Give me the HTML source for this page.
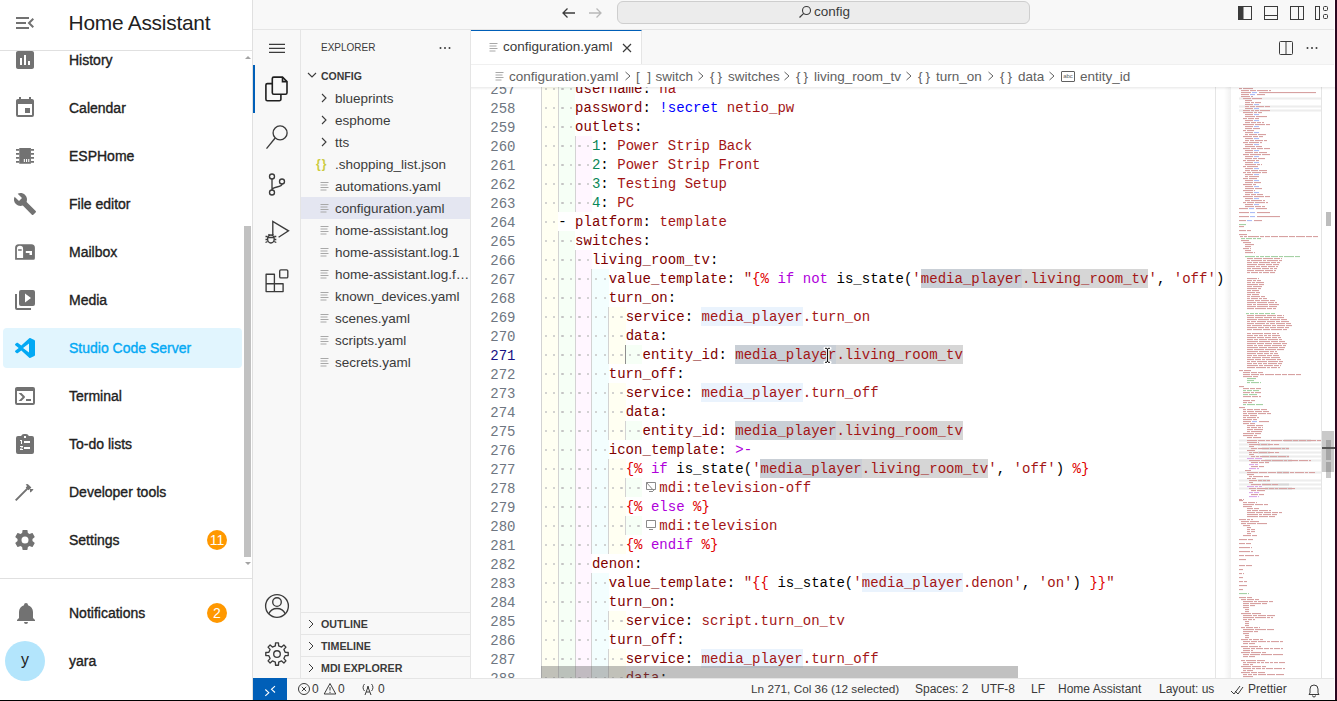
<!DOCTYPE html>
<html><head><meta charset="utf-8">
<style>
*{box-sizing:border-box;margin:0;padding:0}
html,body{width:1337px;height:701px;overflow:hidden;background:#000;position:relative;font-family:"Liberation Sans",sans-serif}
.abs{position:absolute}
/* HA sidebar */
#ha{position:absolute;left:0;top:0;width:253px;height:700px;background:#fff;border-right:1px solid #e0e0e0;overflow:hidden}
#ha .hdr{position:absolute;left:0;top:0;width:252px;height:51px;border-bottom:1px solid #e0e0e0}
#ha .title{position:absolute;left:68.6px;top:10.6px;font-size:20.9px;letter-spacing:-0.25px;color:#212121;white-space:nowrap}
.it{position:absolute;left:3px;width:239px;height:40px;border-radius:4px}
.it .lb{position:absolute;left:66px;top:0;line-height:40px;font-size:14px;color:#212121;white-space:nowrap;-webkit-text-stroke:0.35px #212121}
.it svg{position:absolute;left:10px;top:8px;width:24px;height:24px;fill:#727272}
.it.sel{background:#e1f5fe}
.it.sel .lb{color:#03a9f4;-webkit-text-stroke:0.35px #03a9f4}
.it.sel svg{fill:#03a9f4}
.badge{position:absolute;left:204px;top:10px;width:20px;height:20px;border-radius:10px;background:#ff9800;color:#fff;font-size:14px;line-height:20px;text-align:center}
/* VS Code */
#vs{position:absolute;left:253px;top:0;width:1082px;height:700px;background:#f8f8f8;overflow:hidden;font-family:"Liberation Sans",sans-serif}
#title{position:absolute;left:0;top:0;width:1082px;height:30px;background:#f8f8f8;border-bottom:1px solid #e5e5e5}
#act{position:absolute;left:0;top:30px;width:48px;height:648px;background:#f8f8f8;border-right:1px solid #e5e5e5}
#side{position:absolute;left:48px;top:30px;width:170px;height:648px;background:#f8f8f8;border-right:1px solid #e5e5e5}
#ed{position:absolute;left:218px;top:30px;width:864px;height:648px;background:#fff}
#tabs{position:absolute;left:0;top:0;width:864px;height:35px;background:#f8f8f8;border-bottom:1px solid #e5e5e5}
#status{position:absolute;left:0;top:678px;width:1082px;height:22px;background:#f8f8f8;border-top:1px solid #e5e5e5;font-size:12px;color:#3b3b3b}
.ln{position:absolute;left:0;height:19px;width:700px;white-space:pre}
.ln .tx{position:absolute;left:0;top:1px;font-family:"Liberation Mono",monospace;font-size:14px;line-height:19px;letter-spacing:0.03px;color:#000}
.rb{position:absolute;top:0;height:19px}
.gd{position:absolute;top:0;width:1px;height:19px;background:#d3d3d3}
.gd.act{background:#8f8f8f}
.dt{position:absolute;top:8.8px;width:2.4px;height:2.4px;border-radius:50%;background:#c4c4c4}
.lnum{position:absolute;left:0;margin-top:2px;width:44.5px;text-align:right;font-family:"Liberation Mono",monospace;font-size:14px;line-height:19px;color:#6e7681}
.lnum.act{color:#171184}
.chev{color:#616161}
.abc{display:inline-block;width:14px;height:11px;border:1px solid #616161;font-size:6px;line-height:9px;text-align:center;vertical-align:1px}
.ic1,.ic2{display:inline-block;width:16.86px;height:19px;vertical-align:top;position:relative}
</style></head><body>
<div id="ha">
  <div class="hdr">
    <svg class="abs" style="left:13px;top:11px;width:24px;height:24px;fill:#727272" viewBox="0 0 24 24"><path d="M21,15.61L19.59,17L14.58,12L19.59,7L21,8.39L17.44,12L21,15.61M3,6H16V8H3V6M3,13V11H13V13H3M3,18V16H16V18H3Z"/></svg>
    <div class="title">Home Assistant</div>
  </div>
  <div class="abs" style="left:0;top:51px;width:243px;height:527px;overflow:hidden">
  <div class="it" style="top:-11px"><svg viewBox="0 0 24 24"><path d="M19 3H5C3.9 3 3 3.9 3 5V19C3 20.1 3.9 21 5 21H19C20.1 21 21 20.1 21 19V5C21 3.9 20.1 3 19 3M9 17H7V10H9V17M13 17H11V7H13V17M17 17H15V13H17V17Z"/></svg><div class="lb">History</div></div>
  <div class="it" style="top:37px"><svg viewBox="0 0 24 24"><path d="M19,19H5V8H19M16,1V3H8V1H6V3H5C3.89,3 3,3.89 3,5V19A2,2 0 0,0 5,21H19A2,2 0 0,0 21,19V5C21,3.89 20.1,3 19,3H18V1M17,12H12V17H17V12Z"/></svg><div class="lb">Calendar</div></div>
  <div class="it" style="top:85px"><svg viewBox="0 0 24 24"><path fill-rule="evenodd" d="M6.25 4H17.9V19.75H6.25ZM10.8 14.9V18H11.9V14.9ZM13 14.9V18H14.1V14.9ZM15.2 14.9V18H16.3V14.9Z"/><path d="M3 5H6.3V6.7H3ZM3 9.1H6.3V10.8H3ZM3 13.1H6.3V14.8H3ZM3 17.1H6.3V18.8H3ZM17.9 5H21V6.7H17.9ZM17.9 9.1H21V10.8H17.9ZM17.9 13.1H21V14.8H17.9ZM17.9 17.1H21V18.8H17.9Z"/></svg><div class="lb">ESPHome</div></div>
  <div class="it" style="top:133px"><svg viewBox="0 0 24 24"><path d="M22.7,19L13.6,9.9C14.5,7.6 14,4.9 12.1,3C10.1,1 7.1,0.6 4.7,1.7L9,6L6,9L1.6,4.7C0.4,7.1 0.9,10.1 2.9,12.1C4.8,14 7.5,14.5 9.8,13.6L18.9,22.7C19.3,23.1 19.9,23.1 20.3,22.7L22.6,20.4C23.1,20 23.1,19.3 22.7,19Z"/></svg><div class="lb">File editor</div></div>
  <div class="it" style="top:181px"><svg viewBox="0 0 24 24"><path fill-rule="evenodd" d="M5.6 4.2H18.4A3.5 3.5 0 0 1 21.9 7.7V18.2A1.5 1.5 0 0 1 20.4 19.7H2.1V7.7A3.5 3.5 0 0 1 5.6 4.2ZM7 5.8A3.1 3.1 0 0 0 3.9 8.9V17.9H10.1V8.9A3.1 3.1 0 0 0 7 5.8ZM5.1 9.2V10.8H8.7V9.2ZM12.8 11V13.1H16.5V15H19V11Z"/></svg><div class="lb">Mailbox</div></div>
  <div class="it" style="top:229px"><svg viewBox="0 0 24 24"><path d="M4 6H2V20A2 2 0 0 0 4 22H18V20H4V6M20 2H8A2 2 0 0 0 6 4V16A2 2 0 0 0 8 18H20A2 2 0 0 0 22 16V4A2 2 0 0 0 20 2M12 14.5V5.5L18 10L12 14.5Z"/></svg><div class="lb">Media</div></div>
  <div class="it sel" style="top:277px"><svg viewBox="0 0 24 24" style="left:9px"><path fill-rule="evenodd" d="M17 16.47V7.39L11 11.93ZM3.22 9.19C2.93 8.87 2.93 8.39 3.22 8.07L4.5 6.9C4.83 6.6 5.29 6.58 5.64 6.81L9.3 9.59L17.26 2.37C17.63 2.01 18.2 1.93 18.65 2.13L22.38 3.92C22.75 4.09 23 4.47 23 4.89V19.11C23 19.53 22.75 19.91 22.38 20.08L18.65 21.870C18.2 22.07 17.63 22 17.26 21.63L9.3 14.41L5.64 17.19C5.29 17.42 4.83 17.4 4.5 17.1L3.22 15.93C2.93 15.61 2.93 15.13 3.22 14.81L6.69 12L3.22 9.19Z"/></svg><div class="lb">Studio Code Server</div></div>
  <div class="it" style="top:325px"><svg viewBox="0 0 24 24"><path d="M20,19V7H4V19H20M20,3A2,2 0 0,1 22,5V19A2,2 0 0,1 20,21H4A2,2 0 0,1 2,19V5C2,3.89 2.9,3 4,3H20M13,17V15H18V17H13M9.58,13L5.57,9H8.4L11.7,12.3C12.09,12.69 12.09,13.33 11.7,13.72L8.42,17H5.59L9.58,13Z"/></svg><div class="lb">Terminal</div></div>
  <div class="it" style="top:373px"><svg viewBox="0 0 24 24"><path d="M19 4H15.8C15.4 2.8 14.3 2 13 2H11C9.7 2 8.6 2.8 8.2 4H5A2 2 0 0 0 3 6V20A2 2 0 0 0 5 22H19A2 2 0 0 0 21 20V6A2 2 0 0 0 19 4M11 4H13V6H11V4M7 8H9V12H8V9H7V8M17 11H11V9H17V11M7 14H10V15L8 17H10V18H7V17L9 15H7V14M17 17H11V15H17V17Z"/></svg><div class="lb">To-do lists</div></div>
  <div class="it" style="top:421px"><svg viewBox="0 0 24 24"><path d="M2 19.63L13.43 8.2L12.72 7.5L14.14 6.07L12.72 4.66C13.5 3.88 14.76 3.88 15.55 4.66L18.38 7.5L16.97 8.91H19.8L20.5 9.62L17.67 12.45L16.97 11.74V8.91L15.55 10.33L14.84 9.62L3.41 21.05L2 19.63Z"/></svg><div class="lb">Developer tools</div></div>
  <div class="it" style="top:469px"><svg viewBox="0 0 24 24"><path d="M12,15.5A3.5,3.5 0 0,1 8.5,12A3.5,3.5 0 0,1 12,8.5A3.5,3.5 0 0,1 15.5,12A3.5,3.5 0 0,1 12,15.5M19.43,12.97C19.47,12.65 19.5,12.33 19.5,12C19.5,11.67 19.47,11.34 19.43,11L21.54,9.37C21.73,9.22 21.78,8.95 21.66,8.73L19.66,5.27C19.54,5.05 19.27,4.96 19.05,5.05L16.56,6.05C16.04,5.66 15.5,5.32 14.87,5.07L14.5,2.42C14.46,2.18 14.25,2 14,2H10C9.75,2 9.54,2.18 9.5,2.420L9.13,5.07C8.5,5.32 7.96,5.66 7.44,6.05L4.95,5.05C4.73,4.96 4.46,5.05 4.34,5.27L2.34,8.73C2.21,8.95 2.27,9.220 2.46,9.37L4.57,11C4.53,11.34 4.5,11.67 4.5,12C4.5,12.33 4.53,12.65 4.57,12.97L2.46,14.63C2.27,14.78 2.21,15.05 2.34,15.27L4.34,18.73C4.46,18.95 4.73,19.03 4.95,18.95L7.44,17.94C7.96,18.34 8.5,18.68 9.13,18.93L9.5,21.58C9.54,21.82 9.75,22 10,22H14C14.25,22 14.46,21.82 14.5,21.58L14.87,18.93C15.5,18.67 16.04,18.34 16.56,17.94L19.05,18.95C19.27,19.030 19.54,18.95 19.66,18.73L21.66,15.27C21.78,15.05 21.73,14.78 21.54,14.63L19.43,12.97Z"/></svg><div class="lb">Settings</div><div class="badge">11</div></div>
  </div>
  <div class="abs" style="left:243px;top:52px;width:9px;height:526px">
    <div class="abs" style="left:1px;top:174px;width:7px;height:331px;background:#c1c1c1"></div>
    <div class="abs" style="left:2px;top:4px;width:0;height:0;border-left:3px solid transparent;border-right:3px solid transparent;border-bottom:3px solid #a3a3a3"></div>
    <div class="abs" style="left:2px;top:510px;width:0;height:0;border-left:3px solid transparent;border-right:3px solid transparent;border-top:3px solid #a3a3a3"></div>
  </div>
  <div class="abs" style="left:0;top:578px;width:252px;height:1px;background:#e0e0e0"></div>
  <div class="it" style="top:593px"><svg viewBox="0 0 24 24" style="left:11px"><path d="M21,19V20H3V19L5,17V11C5,7.9 7.03,5.17 10,4.29C10,4.19 10,4.1 10,4A2,2 0 0,1 12,2A2,2 0 0,1 14,4C14,4.1 14,4.19 14,4.29C16.97,5.17 19,7.9 19,11V17L21,19M14,21A2,2 0 0,1 12,23A2,2 0 0,1 10,21"/></svg><div class="lb">Notifications</div><div class="badge">2</div></div>
  <div class="abs" style="left:5px;top:641px;width:40px;height:40px;border-radius:20px;background:#b3e5fc;color:#212121;font-size:16px;line-height:38px;text-align:center">y</div>
  <div class="abs" style="left:69px;top:641px;line-height:40px;font-size:14px;color:#212121;-webkit-text-stroke:0.35px #212121">yara</div>
</div>
<div id="vs">
  <div id="title">
    <svg class="abs" style="left:306px;top:5px;width:20px;height:20px" viewBox="0 0 20 20"><path d="M16 8H4M8.5 3.5L4 8L8.5 12.5" stroke="#3b3b3b" stroke-width="1.3" fill="none"/></svg>
    <svg class="abs" style="left:332px;top:5px;width:20px;height:20px" viewBox="0 0 20 20"><path d="M4 8H16M11.5 3.5L16 8L11.5 12.5" stroke="#b8b8b8" stroke-width="1.3" fill="none"/></svg>
    <div class="abs" style="left:364px;top:1px;width:413px;height:23px;border:1px solid #cecece;border-radius:6px;background:#ececec"></div>
    <svg class="abs" style="left:545px;top:5px;width:14px;height:14px" viewBox="0 0 14 14"><circle cx="8.5" cy="5.5" r="4" stroke="#3b3b3b" stroke-width="1.1" fill="none"/><path d="M5.7 8.3L1.5 12.5" stroke="#3b3b3b" stroke-width="1.2"/></svg>
    <div class="abs" style="left:561px;top:4px;font-size:13.5px;line-height:16px;color:#3b3b3b">config</div>
    <svg class="abs" style="left:984px;top:5px;width:16px;height:16px" viewBox="0 0 16 16"><rect x="1.5" y="1.5" width="13" height="13" stroke="#3b3b3b" fill="none"/><rect x="1.5" y="1.5" width="5" height="13" fill="#3b3b3b"/></svg>
    <svg class="abs" style="left:1010px;top:5px;width:16px;height:16px" viewBox="0 0 16 16"><rect x="1.5" y="1.5" width="13" height="13" stroke="#3b3b3b" fill="none"/><path d="M1.5 10.5H14.5" stroke="#3b3b3b"/></svg>
    <svg class="abs" style="left:1036px;top:5px;width:16px;height:16px" viewBox="0 0 16 16"><rect x="1.5" y="1.5" width="13" height="13" stroke="#3b3b3b" fill="none"/><path d="M9.5 1.5V14.5" stroke="#3b3b3b"/></svg>
    <svg class="abs" style="left:1061px;top:5px;width:16px;height:16px" viewBox="0 0 16 16"><rect x="1.5" y="1.5" width="4" height="13" stroke="#3b3b3b" fill="none"/><rect x="9.5" y="1.5" width="4" height="4" stroke="#3b3b3b" fill="none" rx="1"/><rect x="9.5" y="9.5" width="4" height="4" rx="1" stroke="#3b3b3b" fill="none"/></svg>
  </div>
  <div id="act">
    <div class="abs" style="left:0;top:35px;width:2px;height:48px;background:#005fb8"></div>
    <svg class="abs" style="left:0;top:0;width:48px;height:648px" viewBox="0 0 48 648">
      <g stroke="#3b3b3b" stroke-width="1.35" fill="none">
        <path d="M16 14.3H32M16 18.3H32M16 22.4H32"/>
        <g stroke="#1f1f1f" stroke-width="1.6"><path d="M19.3 48.6A1.5 1.5 0 0 1 20.8 47.1H29.5L34 51.6V62.8A1.5 1.5 0 0 1 32.5 64.3H20.8A1.5 1.5 0 0 1 19.3 62.8Z"/><path d="M29.5 47.1V51.6H34"/><path d="M19.3 53.6H14.4A1.5 1.5 0 0 0 12.9 55.1V69.2A1.5 1.5 0 0 0 14.4 70.7H26.4A1.5 1.5 0 0 0 27.9 69.2V64.3"/></g>
        <circle cx="27.1" cy="102.9" r="7"/>
        <path d="M22.2 108L13.5 118.6"/>
        <circle cx="19" cy="146.5" r="2.5"/><circle cx="19" cy="162.5" r="2.5"/><circle cx="29" cy="151.5" r="2.5"/>
        <path d="M19 149V160M29 154C29 158 19 156 19 160"/>
        <path d="M19.8 205V191.5L35.5 200.8L25.6 207.2"/>
        <ellipse cx="17.9" cy="209" rx="3.3" ry="4"/><path d="M12.5 206.5H14.6M21.2 206.5H23.3M12.5 209.5H14.6M21.2 209.5H23.3M12.5 212.5L14.6 211.5M23.3 212.5L21.2 211.5M15.5 204.3L16.5 205.5M20.3 204.3L19.3 205.5M14.6 207.5H21.2"/>
        <path d="M13.1 244.2H21.4V253.7H13.1ZM13.1 253.7H21.4V261.6H13.1ZM21.4 253.7H30.1V261.6H21.4Z" stroke-linejoin="round"/><rect x="26.7" y="239.9" width="8.1" height="8" rx="1.2"/>
        <circle cx="24" cy="576" r="11.4"/><circle cx="24" cy="572" r="4.3"/><path d="M15.8 583.8C17.5 579.8 20.5 578.5 24 578.5S30.5 579.8 32.2 583.8"/>
      </g>
      <g stroke="#3b3b3b" stroke-width="1.35" fill="none"><path d="M32.13 622.35 L35.20 622.54 L35.20 625.46 L32.13 625.65 L30.92 628.59 L32.96 630.89 L30.89 632.96 L28.59 630.92 L25.65 632.13 L25.46 635.20 L22.54 635.20 L22.35 632.13 L19.41 630.92 L17.11 632.96 L15.04 630.89 L17.08 628.59 L15.87 625.65 L12.80 625.46 L12.80 622.54 L15.87 622.35 L17.08 619.41 L15.04 617.11 L17.11 615.04 L19.41 617.08 L22.35 615.87 L22.54 612.80 L25.46 612.80 L25.65 615.87 L28.59 617.08 L30.89 615.04 L32.96 617.11 L30.92 619.41Z" stroke-linejoin="round"/><circle cx="24" cy="624" r="3.3"/></g>
    </svg>
  </div>
  <div id="side">
    <div class="abs" style="left:20px;top:10px;font-size:10px;line-height:15px;color:#3b3b3b">EXPLORER</div>
    <svg class="abs" style="left:136px;top:10px;width:16px;height:16px" viewBox="0 0 16 16"><circle cx="3.5" cy="8" r="1" fill="#3b3b3b"/><circle cx="8" cy="8" r="1" fill="#3b3b3b"/><circle cx="12.5" cy="8" r="1" fill="#3b3b3b"/></svg>
    <svg class="abs" style="left:3px;top:37px;width:16px;height:16px" viewBox="0 0 16 16"><path d="M4 6L8 10L12 6" stroke="#3b3b3b" stroke-width="1.1" fill="none"/></svg>
    <div class="abs" style="left:20px;top:39px;font-size:10.5px;line-height:15px;color:#3b3b3b;font-weight:bold">CONFIG</div>
    <div class="abs" style="left:0;top:57px;width:169px;height:22px;"><svg class="abs" style="left:15px;top:3px;width:16px;height:16px" viewBox="0 0 16 16"><path d="M6 4L10 8L6 12" stroke="#3b3b3b" stroke-width="1.1" fill="none"/></svg><div class="abs" style="left:34px;top:1px;line-height:22px;font-size:13.5px;color:#3b3b3b;white-space:nowrap">blueprints</div></div>
    <div class="abs" style="left:0;top:79px;width:169px;height:22px;"><svg class="abs" style="left:15px;top:3px;width:16px;height:16px" viewBox="0 0 16 16"><path d="M6 4L10 8L6 12" stroke="#3b3b3b" stroke-width="1.1" fill="none"/></svg><div class="abs" style="left:34px;top:1px;line-height:22px;font-size:13.5px;color:#3b3b3b;white-space:nowrap">esphome</div></div>
    <div class="abs" style="left:0;top:101px;width:169px;height:22px;"><svg class="abs" style="left:15px;top:3px;width:16px;height:16px" viewBox="0 0 16 16"><path d="M6 4L10 8L6 12" stroke="#3b3b3b" stroke-width="1.1" fill="none"/></svg><div class="abs" style="left:34px;top:1px;line-height:22px;font-size:13.5px;color:#3b3b3b;white-space:nowrap">tts</div></div>
    <div class="abs" style="left:0;top:123px;width:169px;height:22px;"><div class="abs" style="left:15px;top:3px;font-size:12px;line-height:16px;color:#cbcb41;font-family:'Liberation Sans';font-weight:bold;letter-spacing:1px">{}</div><div class="abs" style="left:34px;top:1px;line-height:22px;font-size:13.5px;color:#3b3b3b;white-space:nowrap">.shopping_list.json</div></div>
    <div class="abs" style="left:0;top:145px;width:169px;height:22px;"><svg class="abs" style="left:17px;top:3px;width:16px;height:16px" viewBox="0 0 16 16"><path d="M2.5 4.5H10.5M2.5 7H9.5M2.5 9.5H10.5M2.5 12H8.5" stroke="#a8a8a8" stroke-width="1" fill="none"/></svg><div class="abs" style="left:34px;top:1px;line-height:22px;font-size:13.5px;color:#3b3b3b;white-space:nowrap">automations.yaml</div></div>
    <div class="abs" style="left:0;top:167px;width:169px;height:22px;background:#e4e6f1;"><svg class="abs" style="left:17px;top:3px;width:16px;height:16px" viewBox="0 0 16 16"><path d="M2.5 4.5H10.5M2.5 7H9.5M2.5 9.5H10.5M2.5 12H8.5" stroke="#a8a8a8" stroke-width="1" fill="none"/></svg><div class="abs" style="left:34px;top:1px;line-height:22px;font-size:13.5px;color:#3b3b3b;white-space:nowrap">configuration.yaml</div></div>
    <div class="abs" style="left:0;top:189px;width:169px;height:22px;"><svg class="abs" style="left:17px;top:3px;width:16px;height:16px" viewBox="0 0 16 16"><path d="M2.5 4.5H10.5M2.5 7H9.5M2.5 9.5H10.5M2.5 12H8.5" stroke="#a8a8a8" stroke-width="1" fill="none"/></svg><div class="abs" style="left:34px;top:1px;line-height:22px;font-size:13.5px;color:#3b3b3b;white-space:nowrap">home-assistant.log</div></div>
    <div class="abs" style="left:0;top:211px;width:169px;height:22px;"><svg class="abs" style="left:17px;top:3px;width:16px;height:16px" viewBox="0 0 16 16"><path d="M2.5 4.5H10.5M2.5 7H9.5M2.5 9.5H10.5M2.5 12H8.5" stroke="#a8a8a8" stroke-width="1" fill="none"/></svg><div class="abs" style="left:34px;top:1px;line-height:22px;font-size:13.5px;color:#3b3b3b;white-space:nowrap">home-assistant.log.1</div></div>
    <div class="abs" style="left:0;top:233px;width:169px;height:22px;"><svg class="abs" style="left:17px;top:3px;width:16px;height:16px" viewBox="0 0 16 16"><path d="M2.5 4.5H10.5M2.5 7H9.5M2.5 9.5H10.5M2.5 12H8.5" stroke="#a8a8a8" stroke-width="1" fill="none"/></svg><div class="abs" style="left:34px;top:1px;line-height:22px;font-size:13.5px;color:#3b3b3b;white-space:nowrap">home-assistant.log.f…</div></div>
    <div class="abs" style="left:0;top:255px;width:169px;height:22px;"><svg class="abs" style="left:17px;top:3px;width:16px;height:16px" viewBox="0 0 16 16"><path d="M2.5 4.5H10.5M2.5 7H9.5M2.5 9.5H10.5M2.5 12H8.5" stroke="#a8a8a8" stroke-width="1" fill="none"/></svg><div class="abs" style="left:34px;top:1px;line-height:22px;font-size:13.5px;color:#3b3b3b;white-space:nowrap">known_devices.yaml</div></div>
    <div class="abs" style="left:0;top:277px;width:169px;height:22px;"><svg class="abs" style="left:17px;top:3px;width:16px;height:16px" viewBox="0 0 16 16"><path d="M2.5 4.5H10.5M2.5 7H9.5M2.5 9.5H10.5M2.5 12H8.5" stroke="#a8a8a8" stroke-width="1" fill="none"/></svg><div class="abs" style="left:34px;top:1px;line-height:22px;font-size:13.5px;color:#3b3b3b;white-space:nowrap">scenes.yaml</div></div>
    <div class="abs" style="left:0;top:299px;width:169px;height:22px;"><svg class="abs" style="left:17px;top:3px;width:16px;height:16px" viewBox="0 0 16 16"><path d="M2.5 4.5H10.5M2.5 7H9.5M2.5 9.5H10.5M2.5 12H8.5" stroke="#a8a8a8" stroke-width="1" fill="none"/></svg><div class="abs" style="left:34px;top:1px;line-height:22px;font-size:13.5px;color:#3b3b3b;white-space:nowrap">scripts.yaml</div></div>
    <div class="abs" style="left:0;top:321px;width:169px;height:22px;"><svg class="abs" style="left:17px;top:3px;width:16px;height:16px" viewBox="0 0 16 16"><path d="M2.5 4.5H10.5M2.5 7H9.5M2.5 9.5H10.5M2.5 12H8.5" stroke="#a8a8a8" stroke-width="1" fill="none"/></svg><div class="abs" style="left:34px;top:1px;line-height:22px;font-size:13.5px;color:#3b3b3b;white-space:nowrap">secrets.yaml</div></div>
    <div class="abs" style="left:0;top:582px;width:169px;height:1px;background:#e5e5e5"></div>
    <div class="abs" style="left:0;top:604px;width:169px;height:1px;background:#e5e5e5"></div>
    <div class="abs" style="left:0;top:626px;width:169px;height:1px;background:#e5e5e5"></div>
    <svg class="abs" style="left:2px;top:586px;width:16px;height:16px" viewBox="0 0 16 16"><path d="M6 4L10 8L6 12" stroke="#3b3b3b" stroke-width="1" fill="none"/></svg>
    <svg class="abs" style="left:2px;top:608px;width:16px;height:16px" viewBox="0 0 16 16"><path d="M6 4L10 8L6 12" stroke="#3b3b3b" stroke-width="1" fill="none"/></svg>
    <svg class="abs" style="left:2px;top:630px;width:16px;height:16px" viewBox="0 0 16 16"><path d="M6 4L10 8L6 12" stroke="#3b3b3b" stroke-width="1" fill="none"/></svg>
    <div class="abs" style="left:20px;top:587px;font-size:10.7px;line-height:15px;color:#3b3b3b;font-weight:bold">OUTLINE</div>
    <div class="abs" style="left:20px;top:609px;font-size:10.7px;line-height:15px;color:#3b3b3b;font-weight:bold">TIMELINE</div>
    <div class="abs" style="left:20px;top:631px;font-size:10.7px;line-height:15px;color:#3b3b3b;font-weight:bold">MDI EXPLORER</div>
  </div>
  <div id="ed">
    <div id="tabs">
      <div class="abs" style="left:0;top:0;width:171px;height:35px;background:#fff;border-top:1px solid #005fb8;border-right:1px solid #e5e5e5"></div>
      <svg class="abs" style="left:16px;top:9px;width:16px;height:16px" viewBox="0 0 16 16"><path d="M2.5 4.5H10.5M2.5 7H9.5M2.5 9.5H10.5M2.5 12H8.5" stroke="#a8a8a8" stroke-width="1" fill="none"/></svg>
      <div class="abs" style="left:32px;top:9px;font-size:13.5px;line-height:16px;color:#3b3b3b;white-space:nowrap">configuration.yaml</div>
      <svg class="abs" style="left:148px;top:10px;width:16px;height:16px" viewBox="0 0 16 16"><path d="M4 4L12 12M12 4L4 12" stroke="#3b3b3b" stroke-width="1.2"/></svg>
      <svg class="abs" style="left:807px;top:10px;width:16px;height:16px" viewBox="0 0 16 16"><rect x="1.5" y="1.5" width="13" height="13" rx="1" stroke="#3b3b3b" fill="none"/><path d="M8 1.5V14.5" stroke="#3b3b3b"/></svg>
      <svg class="abs" style="left:833px;top:10px;width:16px;height:16px" viewBox="0 0 16 16"><circle cx="3.5" cy="8" r="1" fill="#3b3b3b"/><circle cx="8" cy="8" r="1" fill="#3b3b3b"/><circle cx="12.5" cy="8" r="1" fill="#3b3b3b"/></svg>
    </div>
    <div id="bc" class="abs" style="left:0;top:35px;width:864px;height:22px;background:#fff;font-size:13.5px;line-height:22px;color:#616161;white-space:nowrap">
      <svg class="abs" style="left:22px;top:3px;width:16px;height:16px" viewBox="0 0 16 16"><path d="M2.5 4.5H10.5M2.5 7H9.5M2.5 9.5H10.5M2.5 12H8.5" stroke="#a8a8a8" stroke-width="1" fill="none"/></svg>
      <div class="abs" style="left:38px;top:1px">configuration.yaml</div>
      <svg class="abs" style="left:153px;top:6px;width:8px;height:10px" viewBox="0 0 8 10"><path d="M1.5 1L6 5L1.5 9" stroke="#616161" stroke-width="1" fill="none"/></svg>
      <div class="abs" style="left:165px;top:1px;letter-spacing:0">[&nbsp;&nbsp;]</div>
      <div class="abs" style="left:184.5px;top:1px">switch</div>
      <svg class="abs" style="left:226px;top:6px;width:8px;height:10px" viewBox="0 0 8 10"><path d="M1.5 1L6 5L1.5 9" stroke="#616161" stroke-width="1" fill="none"/></svg>
      <div class="abs" style="left:239px;top:1px;letter-spacing:3px">{}</div>
      <div class="abs" style="left:257px;top:1px">switches</div>
      <svg class="abs" style="left:312px;top:6px;width:8px;height:10px" viewBox="0 0 8 10"><path d="M1.5 1L6 5L1.5 9" stroke="#616161" stroke-width="1" fill="none"/></svg>
      <div class="abs" style="left:325px;top:1px;letter-spacing:3px">{}</div>
      <div class="abs" style="left:343px;top:1px">living_room_tv</div>
      <svg class="abs" style="left:434px;top:6px;width:8px;height:10px" viewBox="0 0 8 10"><path d="M1.5 1L6 5L1.5 9" stroke="#616161" stroke-width="1" fill="none"/></svg>
      <div class="abs" style="left:447px;top:1px;letter-spacing:3px">{}</div>
      <div class="abs" style="left:465px;top:1px">turn_on</div>
      <svg class="abs" style="left:516px;top:6px;width:8px;height:10px" viewBox="0 0 8 10"><path d="M1.5 1L6 5L1.5 9" stroke="#616161" stroke-width="1" fill="none"/></svg>
      <div class="abs" style="left:529px;top:1px;letter-spacing:3px">{}</div>
      <div class="abs" style="left:547px;top:1px">data</div>
      <svg class="abs" style="left:577px;top:6px;width:8px;height:10px" viewBox="0 0 8 10"><path d="M1.5 1L6 5L1.5 9" stroke="#616161" stroke-width="1" fill="none"/></svg>
      <div class="abs" style="left:590px;top:6px;width:14px;height:11px;border:1px solid #616161;border-radius:1px;font-size:6px;line-height:9px;text-align:center">abc</div>
      <div class="abs" style="left:609px;top:1px">entity_id</div>
    </div>
    <div class="abs" style="left:0;top:57px;width:864px;height:3px;background:linear-gradient(rgba(0,0,0,0.08),rgba(0,0,0,0));z-index:5"></div>
    <div class="abs" style="left:0;top:34px;width:864px;height:1px;background:#f0f0f0"></div>
    <div id="code" class="abs" style="left:0;top:57px;width:864px;height:591px;overflow:hidden">
<div class="ln" style="top:-8.0px;left:70.30px"><i class="rb" style="left:0.00px;width:16.86px;background:rgba(255,255,64,0.07)"></i><i class="gd" style="left:-0.50px"></i><i class="rb" style="left:16.86px;width:16.86px;background:rgba(127,255,127,0.07)"></i><i class="gd" style="left:16.36px"></i><i class="dt" style="left:3.21px"></i><i class="dt" style="left:11.64px"></i><i class="dt" style="left:20.07px"></i><i class="dt" style="left:28.50px"></i><span class="tx">    <span style="color:#800000">username</span><span style="color:#000000">: </span><span style="color:#a31515">na</span></span></div>
<div class="lnum" style="top:-8.0px">257</div>
<div class="ln" style="top:11.0px;left:70.30px"><i class="rb" style="left:0.00px;width:16.86px;background:rgba(255,255,64,0.07)"></i><i class="gd" style="left:-0.50px"></i><i class="rb" style="left:16.86px;width:16.86px;background:rgba(127,255,127,0.07)"></i><i class="gd" style="left:16.36px"></i><i class="dt" style="left:3.21px"></i><i class="dt" style="left:11.64px"></i><i class="dt" style="left:20.07px"></i><i class="dt" style="left:28.50px"></i><span class="tx">    <span style="color:#800000">password</span><span style="color:#000000">: </span><span style="color:#0000ff">!secret</span><span style="color:#a31515"> netio_pw</span></span></div>
<div class="lnum" style="top:11.0px">258</div>
<div class="ln" style="top:30.0px;left:70.30px"><i class="rb" style="left:0.00px;width:16.86px;background:rgba(255,255,64,0.07)"></i><i class="gd" style="left:-0.50px"></i><i class="rb" style="left:16.86px;width:16.86px;background:rgba(127,255,127,0.07)"></i><i class="gd" style="left:16.36px"></i><i class="dt" style="left:3.21px"></i><i class="dt" style="left:11.64px"></i><i class="dt" style="left:20.07px"></i><i class="dt" style="left:28.50px"></i><span class="tx">    <span style="color:#800000">outlets</span><span style="color:#000000">:</span></span></div>
<div class="lnum" style="top:30.0px">259</div>
<div class="ln" style="top:49.0px;left:70.30px"><i class="rb" style="left:0.00px;width:16.86px;background:rgba(255,255,64,0.07)"></i><i class="gd" style="left:-0.50px"></i><i class="rb" style="left:16.86px;width:16.86px;background:rgba(127,255,127,0.07)"></i><i class="gd" style="left:16.36px"></i><i class="rb" style="left:33.72px;width:16.86px;background:rgba(255,127,255,0.07)"></i><i class="gd" style="left:33.22px"></i><i class="dt" style="left:3.21px"></i><i class="dt" style="left:11.64px"></i><i class="dt" style="left:20.07px"></i><i class="dt" style="left:28.50px"></i><i class="dt" style="left:36.94px"></i><i class="dt" style="left:45.36px"></i><span class="tx">      <span style="color:#098658">1</span><span style="color:#000000">: </span><span style="color:#a31515">Power Strip Back</span></span></div>
<div class="lnum" style="top:49.0px">260</div>
<div class="ln" style="top:68.0px;left:70.30px"><i class="rb" style="left:0.00px;width:16.86px;background:rgba(255,255,64,0.07)"></i><i class="gd" style="left:-0.50px"></i><i class="rb" style="left:16.86px;width:16.86px;background:rgba(127,255,127,0.07)"></i><i class="gd" style="left:16.36px"></i><i class="rb" style="left:33.72px;width:16.86px;background:rgba(255,127,255,0.07)"></i><i class="gd" style="left:33.22px"></i><i class="dt" style="left:3.21px"></i><i class="dt" style="left:11.64px"></i><i class="dt" style="left:20.07px"></i><i class="dt" style="left:28.50px"></i><i class="dt" style="left:36.94px"></i><i class="dt" style="left:45.36px"></i><span class="tx">      <span style="color:#098658">2</span><span style="color:#000000">: </span><span style="color:#a31515">Power Strip Front</span></span></div>
<div class="lnum" style="top:68.0px">261</div>
<div class="ln" style="top:87.0px;left:70.30px"><i class="rb" style="left:0.00px;width:16.86px;background:rgba(255,255,64,0.07)"></i><i class="gd" style="left:-0.50px"></i><i class="rb" style="left:16.86px;width:16.86px;background:rgba(127,255,127,0.07)"></i><i class="gd" style="left:16.36px"></i><i class="rb" style="left:33.72px;width:16.86px;background:rgba(255,127,255,0.07)"></i><i class="gd" style="left:33.22px"></i><i class="dt" style="left:3.21px"></i><i class="dt" style="left:11.64px"></i><i class="dt" style="left:20.07px"></i><i class="dt" style="left:28.50px"></i><i class="dt" style="left:36.94px"></i><i class="dt" style="left:45.36px"></i><span class="tx">      <span style="color:#098658">3</span><span style="color:#000000">: </span><span style="color:#a31515">Testing Setup</span></span></div>
<div class="lnum" style="top:87.0px">262</div>
<div class="ln" style="top:106.0px;left:70.30px"><i class="rb" style="left:0.00px;width:16.86px;background:rgba(255,255,64,0.07)"></i><i class="gd" style="left:-0.50px"></i><i class="rb" style="left:16.86px;width:16.86px;background:rgba(127,255,127,0.07)"></i><i class="gd" style="left:16.36px"></i><i class="rb" style="left:33.72px;width:16.86px;background:rgba(255,127,255,0.07)"></i><i class="gd" style="left:33.22px"></i><i class="dt" style="left:3.21px"></i><i class="dt" style="left:11.64px"></i><i class="dt" style="left:20.07px"></i><i class="dt" style="left:28.50px"></i><i class="dt" style="left:36.94px"></i><i class="dt" style="left:45.36px"></i><span class="tx">      <span style="color:#098658">4</span><span style="color:#000000">: </span><span style="color:#a31515">PC</span></span></div>
<div class="lnum" style="top:106.0px">263</div>
<div class="ln" style="top:125.0px;left:70.30px"><i class="rb" style="left:0.00px;width:16.86px;background:rgba(255,255,64,0.07)"></i><i class="gd" style="left:-0.50px"></i><i class="dt" style="left:3.21px"></i><i class="dt" style="left:11.64px"></i><span class="tx">  <span style="color:#000000">- </span><span style="color:#800000">platform</span><span style="color:#000000">: </span><span style="color:#a31515">template</span></span></div>
<div class="lnum" style="top:125.0px">264</div>
<div class="ln" style="top:144.0px;left:70.30px"><i class="rb" style="left:0.00px;width:16.86px;background:rgba(255,255,64,0.07)"></i><i class="gd" style="left:-0.50px"></i><i class="rb" style="left:16.86px;width:16.86px;background:rgba(127,255,127,0.07)"></i><i class="gd" style="left:16.36px"></i><i class="dt" style="left:3.21px"></i><i class="dt" style="left:11.64px"></i><i class="dt" style="left:20.07px"></i><i class="dt" style="left:28.50px"></i><span class="tx">    <span style="color:#800000">switches</span><span style="color:#000000">:</span></span></div>
<div class="lnum" style="top:144.0px">265</div>
<div class="ln" style="top:163.0px;left:70.30px"><i class="rb" style="left:0.00px;width:16.86px;background:rgba(255,255,64,0.07)"></i><i class="gd" style="left:-0.50px"></i><i class="rb" style="left:16.86px;width:16.86px;background:rgba(127,255,127,0.07)"></i><i class="gd" style="left:16.36px"></i><i class="rb" style="left:33.72px;width:16.86px;background:rgba(255,127,255,0.07)"></i><i class="gd" style="left:33.22px"></i><i class="dt" style="left:3.21px"></i><i class="dt" style="left:11.64px"></i><i class="dt" style="left:20.07px"></i><i class="dt" style="left:28.50px"></i><i class="dt" style="left:36.94px"></i><i class="dt" style="left:45.36px"></i><span class="tx">      <span style="color:#800000">living_room_tv</span><span style="color:#000000">:</span></span></div>
<div class="lnum" style="top:163.0px">266</div>
<div class="ln" style="top:182.0px;left:70.30px"><i class="rb" style="left:0.00px;width:16.86px;background:rgba(255,255,64,0.07)"></i><i class="gd" style="left:-0.50px"></i><i class="rb" style="left:16.86px;width:16.86px;background:rgba(127,255,127,0.07)"></i><i class="gd" style="left:16.36px"></i><i class="rb" style="left:33.72px;width:16.86px;background:rgba(255,127,255,0.07)"></i><i class="gd" style="left:33.22px"></i><i class="rb" style="left:50.58px;width:16.86px;background:rgba(79,236,236,0.07)"></i><i class="gd" style="left:50.08px"></i><i class="rb" style="left:379.35px;width:101.16px;background:#c9cfd6"></i><i class="rb" style="left:480.51px;width:126.45px;background:#d6d6d6"></i><i class="dt" style="left:3.21px"></i><i class="dt" style="left:11.64px"></i><i class="dt" style="left:20.07px"></i><i class="dt" style="left:28.50px"></i><i class="dt" style="left:36.94px"></i><i class="dt" style="left:45.36px"></i><i class="dt" style="left:53.80px"></i><i class="dt" style="left:62.22px"></i><span class="tx">        <span style="color:#800000">value_template</span><span style="color:#000000">: </span><span style="color:#a31515">&quot;</span><span style="color:#e00000">{%</span><span style="color:#000000"> </span><span style="color:#af00db">if not</span><span style="color:#000000"> is_state(</span><span style="color:#a31515">&#x27;</span><span style="color:#a31515">media_player.living_room_tv</span><span style="color:#a31515">&#x27;</span><span style="color:#000000">, </span><span style="color:#a31515">&#x27;off&#x27;</span><span style="color:#000000">)</span><span style="color:#e00000"> %}&quot;</span></span></div>
<div class="lnum" style="top:182.0px">267</div>
<div class="ln" style="top:201.0px;left:70.30px"><i class="rb" style="left:0.00px;width:16.86px;background:rgba(255,255,64,0.07)"></i><i class="gd" style="left:-0.50px"></i><i class="rb" style="left:16.86px;width:16.86px;background:rgba(127,255,127,0.07)"></i><i class="gd" style="left:16.36px"></i><i class="rb" style="left:33.72px;width:16.86px;background:rgba(255,127,255,0.07)"></i><i class="gd" style="left:33.22px"></i><i class="rb" style="left:50.58px;width:16.86px;background:rgba(79,236,236,0.07)"></i><i class="gd" style="left:50.08px"></i><i class="dt" style="left:3.21px"></i><i class="dt" style="left:11.64px"></i><i class="dt" style="left:20.07px"></i><i class="dt" style="left:28.50px"></i><i class="dt" style="left:36.94px"></i><i class="dt" style="left:45.36px"></i><i class="dt" style="left:53.80px"></i><i class="dt" style="left:62.22px"></i><span class="tx">        <span style="color:#800000">turn_on</span><span style="color:#000000">:</span></span></div>
<div class="lnum" style="top:201.0px">268</div>
<div class="ln" style="top:220.0px;left:70.30px"><i class="rb" style="left:0.00px;width:16.86px;background:rgba(255,255,64,0.07)"></i><i class="gd" style="left:-0.50px"></i><i class="rb" style="left:16.86px;width:16.86px;background:rgba(127,255,127,0.07)"></i><i class="gd" style="left:16.36px"></i><i class="rb" style="left:33.72px;width:16.86px;background:rgba(255,127,255,0.07)"></i><i class="gd" style="left:33.22px"></i><i class="rb" style="left:50.58px;width:16.86px;background:rgba(79,236,236,0.07)"></i><i class="gd" style="left:50.08px"></i><i class="rb" style="left:67.44px;width:16.86px;background:rgba(255,255,64,0.07)"></i><i class="gd" style="left:66.94px"></i><i class="rb" style="left:160.17px;width:101.16px;background:#eaf3fd"></i><i class="dt" style="left:3.21px"></i><i class="dt" style="left:11.64px"></i><i class="dt" style="left:20.07px"></i><i class="dt" style="left:28.50px"></i><i class="dt" style="left:36.94px"></i><i class="dt" style="left:45.36px"></i><i class="dt" style="left:53.80px"></i><i class="dt" style="left:62.22px"></i><i class="dt" style="left:70.66px"></i><i class="dt" style="left:79.08px"></i><span class="tx">          <span style="color:#800000">service</span><span style="color:#000000">: </span><span style="color:#a31515">media_player.turn_on</span></span></div>
<div class="lnum" style="top:220.0px">269</div>
<div class="ln" style="top:239.0px;left:70.30px"><i class="rb" style="left:0.00px;width:16.86px;background:rgba(255,255,64,0.07)"></i><i class="gd" style="left:-0.50px"></i><i class="rb" style="left:16.86px;width:16.86px;background:rgba(127,255,127,0.07)"></i><i class="gd" style="left:16.36px"></i><i class="rb" style="left:33.72px;width:16.86px;background:rgba(255,127,255,0.07)"></i><i class="gd" style="left:33.22px"></i><i class="rb" style="left:50.58px;width:16.86px;background:rgba(79,236,236,0.07)"></i><i class="gd" style="left:50.08px"></i><i class="rb" style="left:67.44px;width:16.86px;background:rgba(255,255,64,0.07)"></i><i class="gd" style="left:66.94px"></i><i class="dt" style="left:3.21px"></i><i class="dt" style="left:11.64px"></i><i class="dt" style="left:20.07px"></i><i class="dt" style="left:28.50px"></i><i class="dt" style="left:36.94px"></i><i class="dt" style="left:45.36px"></i><i class="dt" style="left:53.80px"></i><i class="dt" style="left:62.22px"></i><i class="dt" style="left:70.66px"></i><i class="dt" style="left:79.08px"></i><span class="tx">          <span style="color:#800000">data</span><span style="color:#000000">:</span></span></div>
<div class="lnum" style="top:239.0px">270</div>
<div class="ln" style="top:258.0px;left:70.30px"><i class="rb" style="left:0.00px;width:16.86px;background:rgba(255,255,64,0.07)"></i><i class="gd" style="left:-0.50px"></i><i class="rb" style="left:16.86px;width:16.86px;background:rgba(127,255,127,0.07)"></i><i class="gd" style="left:16.36px"></i><i class="rb" style="left:33.72px;width:16.86px;background:rgba(255,127,255,0.07)"></i><i class="gd" style="left:33.22px"></i><i class="rb" style="left:50.58px;width:16.86px;background:rgba(79,236,236,0.07)"></i><i class="gd" style="left:50.08px"></i><i class="rb" style="left:67.44px;width:16.86px;background:rgba(255,255,64,0.07)"></i><i class="gd" style="left:66.94px"></i><i class="rb" style="left:84.30px;width:16.86px;background:rgba(127,255,127,0.07)"></i><i class="gd act" style="left:83.80px"></i><i class="rb" style="left:193.89px;width:101.16px;background:#c9cfd6"></i><i class="rb" style="left:295.05px;width:126.45px;background:#d6d6d6"></i><i class="dt" style="left:3.21px"></i><i class="dt" style="left:11.64px"></i><i class="dt" style="left:20.07px"></i><i class="dt" style="left:28.50px"></i><i class="dt" style="left:36.94px"></i><i class="dt" style="left:45.36px"></i><i class="dt" style="left:53.80px"></i><i class="dt" style="left:62.22px"></i><i class="dt" style="left:70.66px"></i><i class="dt" style="left:79.08px"></i><i class="dt" style="left:87.52px"></i><i class="dt" style="left:95.94px"></i><span class="tx">            <span style="color:#800000">entity_id</span><span style="color:#000000">: </span><span style="color:#a31515">media_player.living_room_tv</span></span></div>
<div class="lnum act" style="top:258.0px">271</div>
<div class="ln" style="top:277.0px;left:70.30px"><i class="rb" style="left:0.00px;width:16.86px;background:rgba(255,255,64,0.07)"></i><i class="gd" style="left:-0.50px"></i><i class="rb" style="left:16.86px;width:16.86px;background:rgba(127,255,127,0.07)"></i><i class="gd" style="left:16.36px"></i><i class="rb" style="left:33.72px;width:16.86px;background:rgba(255,127,255,0.07)"></i><i class="gd" style="left:33.22px"></i><i class="rb" style="left:50.58px;width:16.86px;background:rgba(79,236,236,0.07)"></i><i class="gd" style="left:50.08px"></i><i class="dt" style="left:3.21px"></i><i class="dt" style="left:11.64px"></i><i class="dt" style="left:20.07px"></i><i class="dt" style="left:28.50px"></i><i class="dt" style="left:36.94px"></i><i class="dt" style="left:45.36px"></i><i class="dt" style="left:53.80px"></i><i class="dt" style="left:62.22px"></i><span class="tx">        <span style="color:#800000">turn_off</span><span style="color:#000000">:</span></span></div>
<div class="lnum" style="top:277.0px">272</div>
<div class="ln" style="top:296.0px;left:70.30px"><i class="rb" style="left:0.00px;width:16.86px;background:rgba(255,255,64,0.07)"></i><i class="gd" style="left:-0.50px"></i><i class="rb" style="left:16.86px;width:16.86px;background:rgba(127,255,127,0.07)"></i><i class="gd" style="left:16.36px"></i><i class="rb" style="left:33.72px;width:16.86px;background:rgba(255,127,255,0.07)"></i><i class="gd" style="left:33.22px"></i><i class="rb" style="left:50.58px;width:16.86px;background:rgba(79,236,236,0.07)"></i><i class="gd" style="left:50.08px"></i><i class="rb" style="left:67.44px;width:16.86px;background:rgba(255,255,64,0.07)"></i><i class="gd" style="left:66.94px"></i><i class="rb" style="left:160.17px;width:101.16px;background:#eaf3fd"></i><i class="dt" style="left:3.21px"></i><i class="dt" style="left:11.64px"></i><i class="dt" style="left:20.07px"></i><i class="dt" style="left:28.50px"></i><i class="dt" style="left:36.94px"></i><i class="dt" style="left:45.36px"></i><i class="dt" style="left:53.80px"></i><i class="dt" style="left:62.22px"></i><i class="dt" style="left:70.66px"></i><i class="dt" style="left:79.08px"></i><span class="tx">          <span style="color:#800000">service</span><span style="color:#000000">: </span><span style="color:#a31515">media_player.turn_off</span></span></div>
<div class="lnum" style="top:296.0px">273</div>
<div class="ln" style="top:315.0px;left:70.30px"><i class="rb" style="left:0.00px;width:16.86px;background:rgba(255,255,64,0.07)"></i><i class="gd" style="left:-0.50px"></i><i class="rb" style="left:16.86px;width:16.86px;background:rgba(127,255,127,0.07)"></i><i class="gd" style="left:16.36px"></i><i class="rb" style="left:33.72px;width:16.86px;background:rgba(255,127,255,0.07)"></i><i class="gd" style="left:33.22px"></i><i class="rb" style="left:50.58px;width:16.86px;background:rgba(79,236,236,0.07)"></i><i class="gd" style="left:50.08px"></i><i class="rb" style="left:67.44px;width:16.86px;background:rgba(255,255,64,0.07)"></i><i class="gd" style="left:66.94px"></i><i class="dt" style="left:3.21px"></i><i class="dt" style="left:11.64px"></i><i class="dt" style="left:20.07px"></i><i class="dt" style="left:28.50px"></i><i class="dt" style="left:36.94px"></i><i class="dt" style="left:45.36px"></i><i class="dt" style="left:53.80px"></i><i class="dt" style="left:62.22px"></i><i class="dt" style="left:70.66px"></i><i class="dt" style="left:79.08px"></i><span class="tx">          <span style="color:#800000">data</span><span style="color:#000000">:</span></span></div>
<div class="lnum" style="top:315.0px">274</div>
<div class="ln" style="top:334.0px;left:70.30px"><i class="rb" style="left:0.00px;width:16.86px;background:rgba(255,255,64,0.07)"></i><i class="gd" style="left:-0.50px"></i><i class="rb" style="left:16.86px;width:16.86px;background:rgba(127,255,127,0.07)"></i><i class="gd" style="left:16.36px"></i><i class="rb" style="left:33.72px;width:16.86px;background:rgba(255,127,255,0.07)"></i><i class="gd" style="left:33.22px"></i><i class="rb" style="left:50.58px;width:16.86px;background:rgba(79,236,236,0.07)"></i><i class="gd" style="left:50.08px"></i><i class="rb" style="left:67.44px;width:16.86px;background:rgba(255,255,64,0.07)"></i><i class="gd" style="left:66.94px"></i><i class="rb" style="left:84.30px;width:16.86px;background:rgba(127,255,127,0.07)"></i><i class="gd" style="left:83.80px"></i><i class="rb" style="left:193.89px;width:101.16px;background:#c9cfd6"></i><i class="rb" style="left:295.05px;width:126.45px;background:#d6d6d6"></i><i class="dt" style="left:3.21px"></i><i class="dt" style="left:11.64px"></i><i class="dt" style="left:20.07px"></i><i class="dt" style="left:28.50px"></i><i class="dt" style="left:36.94px"></i><i class="dt" style="left:45.36px"></i><i class="dt" style="left:53.80px"></i><i class="dt" style="left:62.22px"></i><i class="dt" style="left:70.66px"></i><i class="dt" style="left:79.08px"></i><i class="dt" style="left:87.52px"></i><i class="dt" style="left:95.94px"></i><span class="tx">            <span style="color:#800000">entity_id</span><span style="color:#000000">: </span><span style="color:#a31515">media_player.living_room_tv</span></span></div>
<div class="lnum" style="top:334.0px">275</div>
<div class="ln" style="top:353.0px;left:70.30px"><i class="rb" style="left:0.00px;width:16.86px;background:rgba(255,255,64,0.07)"></i><i class="gd" style="left:-0.50px"></i><i class="rb" style="left:16.86px;width:16.86px;background:rgba(127,255,127,0.07)"></i><i class="gd" style="left:16.36px"></i><i class="rb" style="left:33.72px;width:16.86px;background:rgba(255,127,255,0.07)"></i><i class="gd" style="left:33.22px"></i><i class="rb" style="left:50.58px;width:16.86px;background:rgba(79,236,236,0.07)"></i><i class="gd" style="left:50.08px"></i><i class="dt" style="left:3.21px"></i><i class="dt" style="left:11.64px"></i><i class="dt" style="left:20.07px"></i><i class="dt" style="left:28.50px"></i><i class="dt" style="left:36.94px"></i><i class="dt" style="left:45.36px"></i><i class="dt" style="left:53.80px"></i><i class="dt" style="left:62.22px"></i><span class="tx">        <span style="color:#800000">icon_template</span><span style="color:#000000">: </span><span style="color:#af00db">&gt;-</span></span></div>
<div class="lnum" style="top:353.0px">276</div>
<div class="ln" style="top:372.0px;left:70.30px"><i class="rb" style="left:0.00px;width:16.86px;background:rgba(255,255,64,0.07)"></i><i class="gd" style="left:-0.50px"></i><i class="rb" style="left:16.86px;width:16.86px;background:rgba(127,255,127,0.07)"></i><i class="gd" style="left:16.36px"></i><i class="rb" style="left:33.72px;width:16.86px;background:rgba(255,127,255,0.07)"></i><i class="gd" style="left:33.22px"></i><i class="rb" style="left:50.58px;width:16.86px;background:rgba(79,236,236,0.07)"></i><i class="gd" style="left:50.08px"></i><i class="rb" style="left:67.44px;width:16.86px;background:rgba(255,255,64,0.07)"></i><i class="gd" style="left:66.94px"></i><i class="rb" style="left:219.18px;width:101.16px;background:#c9cfd6"></i><i class="rb" style="left:320.34px;width:126.45px;background:#d6d6d6"></i><i class="dt" style="left:3.21px"></i><i class="dt" style="left:11.64px"></i><i class="dt" style="left:20.07px"></i><i class="dt" style="left:28.50px"></i><i class="dt" style="left:36.94px"></i><i class="dt" style="left:45.36px"></i><i class="dt" style="left:53.80px"></i><i class="dt" style="left:62.22px"></i><i class="dt" style="left:70.66px"></i><i class="dt" style="left:79.08px"></i><span class="tx">          <span style="color:#e00000">{%</span><span style="color:#000000"> </span><span style="color:#af00db">if</span><span style="color:#000000"> is_state(</span><span style="color:#a31515">&#x27;media_player.living_room_tv&#x27;</span><span style="color:#000000">, </span><span style="color:#a31515">&#x27;off&#x27;</span><span style="color:#000000">)</span><span style="color:#000000"> </span><span style="color:#e00000">%}</span></span></div>
<div class="lnum" style="top:372.0px">277</div>
<div class="ln" style="top:391.0px;left:70.30px"><i class="rb" style="left:0.00px;width:16.86px;background:rgba(255,255,64,0.07)"></i><i class="gd" style="left:-0.50px"></i><i class="rb" style="left:16.86px;width:16.86px;background:rgba(127,255,127,0.07)"></i><i class="gd" style="left:16.36px"></i><i class="rb" style="left:33.72px;width:16.86px;background:rgba(255,127,255,0.07)"></i><i class="gd" style="left:33.22px"></i><i class="rb" style="left:50.58px;width:16.86px;background:rgba(79,236,236,0.07)"></i><i class="gd" style="left:50.08px"></i><i class="rb" style="left:67.44px;width:16.86px;background:rgba(255,255,64,0.07)"></i><i class="gd" style="left:66.94px"></i><i class="rb" style="left:84.30px;width:16.86px;background:rgba(127,255,127,0.07)"></i><i class="gd" style="left:83.80px"></i><i class="dt" style="left:3.21px"></i><i class="dt" style="left:11.64px"></i><i class="dt" style="left:20.07px"></i><i class="dt" style="left:28.50px"></i><i class="dt" style="left:36.94px"></i><i class="dt" style="left:45.36px"></i><i class="dt" style="left:53.80px"></i><i class="dt" style="left:62.22px"></i><i class="dt" style="left:70.66px"></i><i class="dt" style="left:79.08px"></i><i class="dt" style="left:87.52px"></i><i class="dt" style="left:95.94px"></i><span class="tx">            <span class="ic1"><svg style="position:absolute;left:2.5px;top:2px;width:12px;height:12px" viewBox="0 0 12 12"><path d="M1.5 1.5H10.5V8.5H1.5Z" stroke="#8a8a8a" fill="none" stroke-width="1"/><path d="M1.5 1.5L9 10" stroke="#8a8a8a" stroke-width="1"/><path d="M4 10.5H8" stroke="#8a8a8a"/></svg></span><span style="color:#a31515">mdi:television-off</span></span></div>
<div class="lnum" style="top:391.0px">278</div>
<div class="ln" style="top:410.0px;left:70.30px"><i class="rb" style="left:0.00px;width:16.86px;background:rgba(255,255,64,0.07)"></i><i class="gd" style="left:-0.50px"></i><i class="rb" style="left:16.86px;width:16.86px;background:rgba(127,255,127,0.07)"></i><i class="gd" style="left:16.36px"></i><i class="rb" style="left:33.72px;width:16.86px;background:rgba(255,127,255,0.07)"></i><i class="gd" style="left:33.22px"></i><i class="rb" style="left:50.58px;width:16.86px;background:rgba(79,236,236,0.07)"></i><i class="gd" style="left:50.08px"></i><i class="rb" style="left:67.44px;width:16.86px;background:rgba(255,255,64,0.07)"></i><i class="gd" style="left:66.94px"></i><i class="dt" style="left:3.21px"></i><i class="dt" style="left:11.64px"></i><i class="dt" style="left:20.07px"></i><i class="dt" style="left:28.50px"></i><i class="dt" style="left:36.94px"></i><i class="dt" style="left:45.36px"></i><i class="dt" style="left:53.80px"></i><i class="dt" style="left:62.22px"></i><i class="dt" style="left:70.66px"></i><i class="dt" style="left:79.08px"></i><span class="tx">          <span style="color:#e00000">{%</span><span style="color:#000000"> </span><span style="color:#af00db">else</span><span style="color:#000000"> </span><span style="color:#e00000">%}</span></span></div>
<div class="lnum" style="top:410.0px">279</div>
<div class="ln" style="top:429.0px;left:70.30px"><i class="rb" style="left:0.00px;width:16.86px;background:rgba(255,255,64,0.07)"></i><i class="gd" style="left:-0.50px"></i><i class="rb" style="left:16.86px;width:16.86px;background:rgba(127,255,127,0.07)"></i><i class="gd" style="left:16.36px"></i><i class="rb" style="left:33.72px;width:16.86px;background:rgba(255,127,255,0.07)"></i><i class="gd" style="left:33.22px"></i><i class="rb" style="left:50.58px;width:16.86px;background:rgba(79,236,236,0.07)"></i><i class="gd" style="left:50.08px"></i><i class="rb" style="left:67.44px;width:16.86px;background:rgba(255,255,64,0.07)"></i><i class="gd" style="left:66.94px"></i><i class="rb" style="left:84.30px;width:16.86px;background:rgba(127,255,127,0.07)"></i><i class="gd" style="left:83.80px"></i><i class="dt" style="left:3.21px"></i><i class="dt" style="left:11.64px"></i><i class="dt" style="left:20.07px"></i><i class="dt" style="left:28.50px"></i><i class="dt" style="left:36.94px"></i><i class="dt" style="left:45.36px"></i><i class="dt" style="left:53.80px"></i><i class="dt" style="left:62.22px"></i><i class="dt" style="left:70.66px"></i><i class="dt" style="left:79.08px"></i><i class="dt" style="left:87.52px"></i><i class="dt" style="left:95.94px"></i><span class="tx">            <span class="ic2"><svg style="position:absolute;left:2.5px;top:2px;width:12px;height:12px" viewBox="0 0 12 12"><path d="M1.5 1.5H10.5V8.5H1.5Z" stroke="#8a8a8a" fill="none" stroke-width="1"/><path d="M4 10.5H8" stroke="#8a8a8a"/></svg></span><span style="color:#a31515">mdi:television</span></span></div>
<div class="lnum" style="top:429.0px">280</div>
<div class="ln" style="top:448.0px;left:70.30px"><i class="rb" style="left:0.00px;width:16.86px;background:rgba(255,255,64,0.07)"></i><i class="gd" style="left:-0.50px"></i><i class="rb" style="left:16.86px;width:16.86px;background:rgba(127,255,127,0.07)"></i><i class="gd" style="left:16.36px"></i><i class="rb" style="left:33.72px;width:16.86px;background:rgba(255,127,255,0.07)"></i><i class="gd" style="left:33.22px"></i><i class="rb" style="left:50.58px;width:16.86px;background:rgba(79,236,236,0.07)"></i><i class="gd" style="left:50.08px"></i><i class="rb" style="left:67.44px;width:16.86px;background:rgba(255,255,64,0.07)"></i><i class="gd" style="left:66.94px"></i><i class="dt" style="left:3.21px"></i><i class="dt" style="left:11.64px"></i><i class="dt" style="left:20.07px"></i><i class="dt" style="left:28.50px"></i><i class="dt" style="left:36.94px"></i><i class="dt" style="left:45.36px"></i><i class="dt" style="left:53.80px"></i><i class="dt" style="left:62.22px"></i><i class="dt" style="left:70.66px"></i><i class="dt" style="left:79.08px"></i><span class="tx">          <span style="color:#e00000">{%</span><span style="color:#000000"> </span><span style="color:#af00db">endif</span><span style="color:#000000"> </span><span style="color:#e00000">%}</span></span></div>
<div class="lnum" style="top:448.0px">281</div>
<div class="ln" style="top:467.0px;left:70.30px"><i class="rb" style="left:0.00px;width:16.86px;background:rgba(255,255,64,0.07)"></i><i class="gd" style="left:-0.50px"></i><i class="rb" style="left:16.86px;width:16.86px;background:rgba(127,255,127,0.07)"></i><i class="gd" style="left:16.36px"></i><i class="rb" style="left:33.72px;width:16.86px;background:rgba(255,127,255,0.07)"></i><i class="gd" style="left:33.22px"></i><i class="dt" style="left:3.21px"></i><i class="dt" style="left:11.64px"></i><i class="dt" style="left:20.07px"></i><i class="dt" style="left:28.50px"></i><i class="dt" style="left:36.94px"></i><i class="dt" style="left:45.36px"></i><span class="tx">      <span style="color:#800000">denon</span><span style="color:#000000">:</span></span></div>
<div class="lnum" style="top:467.0px">282</div>
<div class="ln" style="top:486.0px;left:70.30px"><i class="rb" style="left:0.00px;width:16.86px;background:rgba(255,255,64,0.07)"></i><i class="gd" style="left:-0.50px"></i><i class="rb" style="left:16.86px;width:16.86px;background:rgba(127,255,127,0.07)"></i><i class="gd" style="left:16.36px"></i><i class="rb" style="left:33.72px;width:16.86px;background:rgba(255,127,255,0.07)"></i><i class="gd" style="left:33.22px"></i><i class="rb" style="left:50.58px;width:16.86px;background:rgba(79,236,236,0.07)"></i><i class="gd" style="left:50.08px"></i><i class="rb" style="left:320.34px;width:101.16px;background:#eaf3fd"></i><i class="dt" style="left:3.21px"></i><i class="dt" style="left:11.64px"></i><i class="dt" style="left:20.07px"></i><i class="dt" style="left:28.50px"></i><i class="dt" style="left:36.94px"></i><i class="dt" style="left:45.36px"></i><i class="dt" style="left:53.80px"></i><i class="dt" style="left:62.22px"></i><span class="tx">        <span style="color:#800000">value_template</span><span style="color:#000000">: </span><span style="color:#a31515">&quot;</span><span style="color:#e00000">{{</span><span style="color:#000000"> is_state(</span><span style="color:#a31515">&#x27;media_player.denon&#x27;</span><span style="color:#000000">, </span><span style="color:#a31515">&#x27;on&#x27;</span><span style="color:#000000">)</span><span style="color:#000000"> </span><span style="color:#e00000">}}</span><span style="color:#a31515">&quot;</span></span></div>
<div class="lnum" style="top:486.0px">283</div>
<div class="ln" style="top:505.0px;left:70.30px"><i class="rb" style="left:0.00px;width:16.86px;background:rgba(255,255,64,0.07)"></i><i class="gd" style="left:-0.50px"></i><i class="rb" style="left:16.86px;width:16.86px;background:rgba(127,255,127,0.07)"></i><i class="gd" style="left:16.36px"></i><i class="rb" style="left:33.72px;width:16.86px;background:rgba(255,127,255,0.07)"></i><i class="gd" style="left:33.22px"></i><i class="rb" style="left:50.58px;width:16.86px;background:rgba(79,236,236,0.07)"></i><i class="gd" style="left:50.08px"></i><i class="dt" style="left:3.21px"></i><i class="dt" style="left:11.64px"></i><i class="dt" style="left:20.07px"></i><i class="dt" style="left:28.50px"></i><i class="dt" style="left:36.94px"></i><i class="dt" style="left:45.36px"></i><i class="dt" style="left:53.80px"></i><i class="dt" style="left:62.22px"></i><span class="tx">        <span style="color:#800000">turn_on</span><span style="color:#000000">:</span></span></div>
<div class="lnum" style="top:505.0px">284</div>
<div class="ln" style="top:524.0px;left:70.30px"><i class="rb" style="left:0.00px;width:16.86px;background:rgba(255,255,64,0.07)"></i><i class="gd" style="left:-0.50px"></i><i class="rb" style="left:16.86px;width:16.86px;background:rgba(127,255,127,0.07)"></i><i class="gd" style="left:16.36px"></i><i class="rb" style="left:33.72px;width:16.86px;background:rgba(255,127,255,0.07)"></i><i class="gd" style="left:33.22px"></i><i class="rb" style="left:50.58px;width:16.86px;background:rgba(79,236,236,0.07)"></i><i class="gd" style="left:50.08px"></i><i class="rb" style="left:67.44px;width:16.86px;background:rgba(255,255,64,0.07)"></i><i class="gd" style="left:66.94px"></i><i class="dt" style="left:3.21px"></i><i class="dt" style="left:11.64px"></i><i class="dt" style="left:20.07px"></i><i class="dt" style="left:28.50px"></i><i class="dt" style="left:36.94px"></i><i class="dt" style="left:45.36px"></i><i class="dt" style="left:53.80px"></i><i class="dt" style="left:62.22px"></i><i class="dt" style="left:70.66px"></i><i class="dt" style="left:79.08px"></i><span class="tx">          <span style="color:#800000">service</span><span style="color:#000000">: </span><span style="color:#a31515">script.turn_on_tv</span></span></div>
<div class="lnum" style="top:524.0px">285</div>
<div class="ln" style="top:543.0px;left:70.30px"><i class="rb" style="left:0.00px;width:16.86px;background:rgba(255,255,64,0.07)"></i><i class="gd" style="left:-0.50px"></i><i class="rb" style="left:16.86px;width:16.86px;background:rgba(127,255,127,0.07)"></i><i class="gd" style="left:16.36px"></i><i class="rb" style="left:33.72px;width:16.86px;background:rgba(255,127,255,0.07)"></i><i class="gd" style="left:33.22px"></i><i class="rb" style="left:50.58px;width:16.86px;background:rgba(79,236,236,0.07)"></i><i class="gd" style="left:50.08px"></i><i class="dt" style="left:3.21px"></i><i class="dt" style="left:11.64px"></i><i class="dt" style="left:20.07px"></i><i class="dt" style="left:28.50px"></i><i class="dt" style="left:36.94px"></i><i class="dt" style="left:45.36px"></i><i class="dt" style="left:53.80px"></i><i class="dt" style="left:62.22px"></i><span class="tx">        <span style="color:#800000">turn_off</span><span style="color:#000000">:</span></span></div>
<div class="lnum" style="top:543.0px">286</div>
<div class="ln" style="top:562.0px;left:70.30px"><i class="rb" style="left:0.00px;width:16.86px;background:rgba(255,255,64,0.07)"></i><i class="gd" style="left:-0.50px"></i><i class="rb" style="left:16.86px;width:16.86px;background:rgba(127,255,127,0.07)"></i><i class="gd" style="left:16.36px"></i><i class="rb" style="left:33.72px;width:16.86px;background:rgba(255,127,255,0.07)"></i><i class="gd" style="left:33.22px"></i><i class="rb" style="left:50.58px;width:16.86px;background:rgba(79,236,236,0.07)"></i><i class="gd" style="left:50.08px"></i><i class="rb" style="left:67.44px;width:16.86px;background:rgba(255,255,64,0.07)"></i><i class="gd" style="left:66.94px"></i><i class="rb" style="left:160.17px;width:101.16px;background:#eaf3fd"></i><i class="dt" style="left:3.21px"></i><i class="dt" style="left:11.64px"></i><i class="dt" style="left:20.07px"></i><i class="dt" style="left:28.50px"></i><i class="dt" style="left:36.94px"></i><i class="dt" style="left:45.36px"></i><i class="dt" style="left:53.80px"></i><i class="dt" style="left:62.22px"></i><i class="dt" style="left:70.66px"></i><i class="dt" style="left:79.08px"></i><span class="tx">          <span style="color:#800000">service</span><span style="color:#000000">: </span><span style="color:#a31515">media_player.turn_off</span></span></div>
<div class="lnum" style="top:562.0px">287</div>
<div class="ln" style="top:581.0px;left:70.30px"><i class="rb" style="left:0.00px;width:16.86px;background:rgba(255,255,64,0.07)"></i><i class="gd" style="left:-0.50px"></i><i class="rb" style="left:16.86px;width:16.86px;background:rgba(127,255,127,0.07)"></i><i class="gd" style="left:16.36px"></i><i class="rb" style="left:33.72px;width:16.86px;background:rgba(255,127,255,0.07)"></i><i class="gd" style="left:33.22px"></i><i class="rb" style="left:50.58px;width:16.86px;background:rgba(79,236,236,0.07)"></i><i class="gd" style="left:50.08px"></i><i class="rb" style="left:67.44px;width:16.86px;background:rgba(255,255,64,0.07)"></i><i class="gd" style="left:66.94px"></i><i class="dt" style="left:3.21px"></i><i class="dt" style="left:11.64px"></i><i class="dt" style="left:20.07px"></i><i class="dt" style="left:28.50px"></i><i class="dt" style="left:36.94px"></i><i class="dt" style="left:45.36px"></i><i class="dt" style="left:53.80px"></i><i class="dt" style="left:62.22px"></i><i class="dt" style="left:70.66px"></i><i class="dt" style="left:79.08px"></i><span class="tx">          <span style="color:#800000">data</span><span style="color:#000000">:</span></span></div>
<div class="lnum" style="top:581.0px">288</div>
    </div>
  </div>
  <div id="status">
    <div class="abs" style="left:0;top:-1px;width:34px;height:23px;background:#005fb8"></div>
    <svg class="abs" style="left:9px;top:2px;width:16px;height:16px" viewBox="0 0 16 16"><path d="M3.3 8.5L6.8 11.7L3.3 14.8M13 5.2L9.5 8.3L13 11.5" stroke="#fff" stroke-width="1.1" fill="none"/></svg>
    <svg class="abs" style="left:44px;top:3px;width:14px;height:14px" viewBox="0 0 14 14"><circle cx="7" cy="7" r="5.5" stroke="#3b3b3b" fill="none"/><path d="M4.8 4.8L9.2 9.2M9.2 4.8L4.8 9.2" stroke="#3b3b3b"/></svg>
    <div class="abs" style="left:59px;top:3px;line-height:15px">0</div>
    <svg class="abs" style="left:70px;top:3px;width:14px;height:14px" viewBox="0 0 14 14"><path d="M7 1.5L12.8 12H1.2Z" stroke="#3b3b3b" fill="none"/><path d="M7 5V8.5M7 9.8V11" stroke="#3b3b3b"/></svg>
    <div class="abs" style="left:85px;top:3px;line-height:15px">0</div>
    <svg class="abs" style="left:108px;top:3px;width:14px;height:14px" viewBox="0 0 14 14"><path d="M7 5L4 13M7 5L10 13M5.2 10H8.8M3.5 2A5 5 0 0 0 3.5 9M10.5 2A5 5 0 0 1 10.5 9" stroke="#3b3b3b" fill="none"/><circle cx="7" cy="5" r="1" fill="#3b3b3b"/></svg>
    <div class="abs" style="left:125px;top:3px;line-height:15px">0</div>
    <div class="abs" style="left:498px;top:3px;line-height:15px;white-space:nowrap;font-size:11.8px">Ln 271, Col 36 (12 selected)</div>
    <div class="abs" style="left:662px;top:3px;line-height:15px;white-space:nowrap">Spaces: 2</div>
    <div class="abs" style="left:728px;top:3px;line-height:15px;white-space:nowrap">UTF-8</div>
    <div class="abs" style="left:778px;top:3px;line-height:15px;white-space:nowrap">LF</div>
    <div class="abs" style="left:805px;top:3px;line-height:15px;white-space:nowrap">Home Assistant</div>
    <div class="abs" style="left:906px;top:3px;line-height:15px;white-space:nowrap">Layout: us</div>
    <svg class="abs" style="left:977px;top:4px;width:14px;height:14px" viewBox="0 0 14 14"><path d="M1 8L4 11L10 3M5 8L8 11L13 4" stroke="#3b3b3b" fill="none"/></svg>
    <div class="abs" style="left:995px;top:3px;line-height:15px;white-space:nowrap">Prettier</div>
    <svg class="abs" style="left:1053px;top:3px;width:16px;height:16px" viewBox="0 0 16 16"><path d="M4 11V7A4 4 0 0 1 12 7V11L13 12.5H3Z" stroke="#3b3b3b" fill="none"/><path d="M6.5 13.5A1.5 1.5 0 0 0 9.5 13.5" stroke="#3b3b3b" fill="none"/></svg>
  </div>
</div>

  <div class="abs" style="left:1335px;top:0;width:2px;height:700px;background:#2a0820"></div>
  <div class="abs" style="left:1334px;top:0;width:1px;height:700px;background:#fff"></div>
  
  <div class="abs" style="left:1215px;top:87px;width:1px;height:591px;background:#e5e5e5"></div>
  <div class="abs" style="left:1224px;top:87px;width:7px;height:591px;background:linear-gradient(90deg,rgba(0,0,0,0),rgba(0,0,0,0.06))"></div>
  <div class="abs" style="left:1231px;top:87px;width:90px;height:591px;background:#fff"></div>
  <svg class="abs" style="left:1231px;top:87px;width:90px;height:591px;opacity:0.45" viewBox="0 0 90 591"><rect x="8" y="1" width="3" height="1.1" fill="#a83030"/><rect x="12" y="1" width="10" height="1.1" fill="#a83030"/><rect x="10" y="3" width="8" height="1.1" fill="#a83030"/><rect x="19" y="3" width="6" height="1.1" fill="#a83030"/><rect x="26" y="3" width="11" height="1.1" fill="#a83030"/><rect x="38" y="3" width="2" height="1.1" fill="#a83030"/><rect x="10" y="5" width="10" height="1.1" fill="#a83030"/><rect x="21" y="5" width="5" height="1.1" fill="#4a6ae8"/><rect x="28" y="5" width="57" height="1.1" fill="#a83030"/><rect x="10" y="7" width="8" height="1.1" fill="#a83030"/><rect x="19" y="7" width="5" height="1.1" fill="#4a6ae8"/><rect x="26" y="7" width="8" height="1.1" fill="#a83030"/><rect x="10" y="9" width="9" height="1.1" fill="#a83030"/><rect x="20" y="9" width="2" height="1.1" fill="#a83030"/><rect x="8" y="10.5" width="82" height="2" fill="#d8d8d8"/><rect x="12" y="11" width="8" height="1.1" fill="#a83030"/><rect x="21" y="11" width="10" height="1.1" fill="#a83030"/><rect x="14" y="13" width="7" height="1.1" fill="#a83030"/><rect x="14" y="15" width="5" height="1.1" fill="#a83030"/><rect x="20" y="15" width="3" height="1.1" fill="#a83030"/><rect x="24" y="15" width="6" height="1.1" fill="#a83030"/><rect x="14" y="17" width="8" height="1.1" fill="#a83030"/><rect x="23" y="17" width="5" height="1.1" fill="#4a6ae8"/><rect x="8" y="18.5" width="82" height="2" fill="#d8d8d8"/><rect x="14" y="19" width="4" height="1.1" fill="#a83030"/><rect x="19" y="19" width="5" height="1.1" fill="#a83030"/><rect x="25" y="19" width="8" height="1.1" fill="#a83030"/><rect x="34" y="19" width="5" height="1.1" fill="#a83030"/><rect x="14" y="21" width="8" height="1.1" fill="#a83030"/><rect x="23" y="21" width="5" height="1.1" fill="#4a6ae8"/><rect x="8" y="22.5" width="82" height="2" fill="#d8d8d8"/><rect x="12" y="23" width="7" height="1.1" fill="#a83030"/><rect x="20" y="23" width="3" height="1.1" fill="#a83030"/><rect x="24" y="23" width="4" height="1.1" fill="#a83030"/><rect x="29" y="23" width="10" height="1.1" fill="#a83030"/><rect x="12" y="25" width="10" height="1.1" fill="#a83030"/><rect x="23" y="25" width="3" height="1.1" fill="#a83030"/><rect x="27" y="25" width="4" height="1.1" fill="#a83030"/><rect x="14" y="27" width="8" height="1.1" fill="#a83030"/><rect x="23" y="27" width="5" height="1.1" fill="#4a6ae8"/><rect x="14" y="29" width="10" height="1.1" fill="#a83030"/><rect x="25" y="29" width="11" height="1.1" fill="#a83030"/><rect x="12" y="31" width="4" height="1.1" fill="#a83030"/><rect x="17" y="31" width="6" height="1.1" fill="#a83030"/><rect x="24" y="31" width="4" height="1.1" fill="#a83030"/><rect x="14" y="33" width="8" height="1.1" fill="#a83030"/><rect x="23" y="33" width="5" height="1.1" fill="#4a6ae8"/><rect x="14" y="35" width="5" height="1.1" fill="#a83030"/><rect x="20" y="35" width="5" height="1.1" fill="#a83030"/><rect x="26" y="35" width="4" height="1.1" fill="#a83030"/><rect x="31" y="35" width="2" height="1.1" fill="#a83030"/><rect x="12" y="37" width="11" height="1.1" fill="#a83030"/><rect x="24" y="37" width="10" height="1.1" fill="#a83030"/><rect x="35" y="37" width="4" height="1.1" fill="#a83030"/><rect x="14" y="39" width="8" height="1.1" fill="#a83030"/><rect x="23" y="39" width="5" height="1.1" fill="#4a6ae8"/><rect x="14" y="41" width="7" height="1.1" fill="#a83030"/><rect x="22" y="41" width="7" height="1.1" fill="#a83030"/><rect x="12" y="43" width="3" height="1.1" fill="#a83030"/><rect x="16" y="43" width="7" height="1.1" fill="#a83030"/><rect x="14" y="45" width="8" height="1.1" fill="#a83030"/><rect x="23" y="45" width="5" height="1.1" fill="#4a6ae8"/><rect x="14" y="47" width="3" height="1.1" fill="#a83030"/><rect x="18" y="47" width="8" height="1.1" fill="#a83030"/><rect x="27" y="47" width="8" height="1.1" fill="#a83030"/><rect x="12" y="49" width="9" height="1.1" fill="#a83030"/><rect x="22" y="49" width="5" height="1.1" fill="#a83030"/><rect x="28" y="49" width="4" height="1.1" fill="#a83030"/><rect x="14" y="51" width="8" height="1.1" fill="#a83030"/><rect x="23" y="51" width="5" height="1.1" fill="#4a6ae8"/><rect x="14" y="53" width="4" height="1.1" fill="#a83030"/><rect x="19" y="53" width="4" height="1.1" fill="#a83030"/><rect x="24" y="53" width="8" height="1.1" fill="#a83030"/><rect x="33" y="53" width="3" height="1.1" fill="#a83030"/><rect x="12" y="55" width="5" height="1.1" fill="#a83030"/><rect x="18" y="55" width="10" height="1.1" fill="#a83030"/><rect x="29" y="55" width="2" height="1.1" fill="#a83030"/><rect x="14" y="57" width="8" height="1.1" fill="#a83030"/><rect x="23" y="57" width="5" height="1.1" fill="#4a6ae8"/><rect x="14" y="59" width="10" height="1.1" fill="#a83030"/><rect x="25" y="59" width="6" height="1.1" fill="#a83030"/><rect x="12" y="61" width="7" height="1.1" fill="#a83030"/><rect x="20" y="61" width="5" height="1.1" fill="#a83030"/><rect x="26" y="61" width="6" height="1.1" fill="#a83030"/><rect x="33" y="61" width="6" height="1.1" fill="#a83030"/><rect x="14" y="63" width="8" height="1.1" fill="#a83030"/><rect x="23" y="63" width="5" height="1.1" fill="#4a6ae8"/><rect x="14" y="65" width="8" height="1.1" fill="#a83030"/><rect x="23" y="65" width="4" height="1.1" fill="#a83030"/><rect x="28" y="65" width="8" height="1.1" fill="#a83030"/><rect x="12" y="67" width="6" height="1.1" fill="#a83030"/><rect x="19" y="67" width="11" height="1.1" fill="#a83030"/><rect x="31" y="67" width="8" height="1.1" fill="#a83030"/><rect x="14" y="69" width="8" height="1.1" fill="#a83030"/><rect x="23" y="69" width="5" height="1.1" fill="#4a6ae8"/><rect x="14" y="71" width="7" height="1.1" fill="#a83030"/><rect x="22" y="71" width="4" height="1.1" fill="#a83030"/><rect x="27" y="71" width="7" height="1.1" fill="#a83030"/><rect x="12" y="73" width="3" height="1.1" fill="#a83030"/><rect x="16" y="73" width="8" height="1.1" fill="#a83030"/><rect x="25" y="73" width="3" height="1.1" fill="#a83030"/><rect x="14" y="75" width="8" height="1.1" fill="#a83030"/><rect x="23" y="75" width="5" height="1.1" fill="#4a6ae8"/><rect x="14" y="77" width="11" height="1.1" fill="#a83030"/><rect x="26" y="77" width="3" height="1.1" fill="#a83030"/><rect x="30" y="77" width="1" height="1.1" fill="#a83030"/><rect x="12" y="79" width="3" height="1.1" fill="#a83030"/><rect x="16" y="79" width="11" height="1.1" fill="#a83030"/><rect x="14" y="81" width="8" height="1.1" fill="#a83030"/><rect x="23" y="81" width="5" height="1.1" fill="#4a6ae8"/><rect x="14" y="83" width="5" height="1.1" fill="#a83030"/><rect x="20" y="83" width="7" height="1.1" fill="#a83030"/><rect x="28" y="83" width="8" height="1.1" fill="#a83030"/><rect x="12" y="85" width="3" height="1.1" fill="#a83030"/><rect x="16" y="85" width="4" height="1.1" fill="#a83030"/><rect x="21" y="85" width="9" height="1.1" fill="#a83030"/><rect x="31" y="85" width="5" height="1.1" fill="#a83030"/><rect x="14" y="87" width="8" height="1.1" fill="#a83030"/><rect x="23" y="87" width="5" height="1.1" fill="#4a6ae8"/><rect x="14" y="89" width="3" height="1.1" fill="#a83030"/><rect x="18" y="89" width="10" height="1.1" fill="#a83030"/><rect x="12" y="91" width="5" height="1.1" fill="#a83030"/><rect x="18" y="91" width="8" height="1.1" fill="#a83030"/><rect x="14" y="93" width="8" height="1.1" fill="#a83030"/><rect x="23" y="93" width="5" height="1.1" fill="#4a6ae8"/><rect x="14" y="95" width="8" height="1.1" fill="#a83030"/><rect x="23" y="95" width="7" height="1.1" fill="#a83030"/><rect x="12" y="97" width="9" height="1.1" fill="#a83030"/><rect x="22" y="97" width="3" height="1.1" fill="#a83030"/><rect x="14" y="99" width="8" height="1.1" fill="#a83030"/><rect x="23" y="99" width="5" height="1.1" fill="#4a6ae8"/><rect x="14" y="101" width="9" height="1.1" fill="#a83030"/><rect x="24" y="101" width="7" height="1.1" fill="#a83030"/><rect x="12" y="103" width="10" height="1.1" fill="#a83030"/><rect x="23" y="103" width="1" height="1.1" fill="#a83030"/><rect x="14" y="105" width="8" height="1.1" fill="#a83030"/><rect x="23" y="105" width="5" height="1.1" fill="#4a6ae8"/><rect x="14" y="107" width="5" height="1.1" fill="#a83030"/><rect x="20" y="107" width="5" height="1.1" fill="#a83030"/><rect x="26" y="107" width="6" height="1.1" fill="#a83030"/><rect x="12" y="109" width="10" height="1.1" fill="#a83030"/><rect x="23" y="109" width="10" height="1.1" fill="#a83030"/><rect x="34" y="109" width="5" height="1.1" fill="#a83030"/><rect x="14" y="111" width="8" height="1.1" fill="#a83030"/><rect x="23" y="111" width="5" height="1.1" fill="#4a6ae8"/><rect x="14" y="113" width="5" height="1.1" fill="#a83030"/><rect x="20" y="113" width="11" height="1.1" fill="#a83030"/><rect x="32" y="113" width="2" height="1.1" fill="#a83030"/><rect x="12" y="115" width="3" height="1.1" fill="#a83030"/><rect x="16" y="115" width="7" height="1.1" fill="#a83030"/><rect x="24" y="115" width="10" height="1.1" fill="#a83030"/><rect x="35" y="115" width="2" height="1.1" fill="#a83030"/><rect x="14" y="117" width="8" height="1.1" fill="#a83030"/><rect x="23" y="117" width="5" height="1.1" fill="#4a6ae8"/><rect x="14" y="119" width="9" height="1.1" fill="#a83030"/><rect x="24" y="119" width="6" height="1.1" fill="#a83030"/><rect x="31" y="119" width="3" height="1.1" fill="#a83030"/><rect x="8" y="121" width="9" height="1.1" fill="#a83030"/><rect x="18" y="121" width="5" height="1.1" fill="#4a6ae8"/><rect x="25" y="121" width="11" height="1.1" fill="#a83030"/><rect x="8" y="125" width="10" height="1.1" fill="#a83030"/><rect x="19" y="125" width="5" height="1.1" fill="#4a6ae8"/><rect x="26" y="125" width="13" height="1.1" fill="#a83030"/><rect x="8" y="129" width="10" height="1.1" fill="#a83030"/><rect x="19" y="129" width="5" height="1.1" fill="#4a6ae8"/><rect x="26" y="129" width="23" height="1.1" fill="#a83030"/><rect x="8" y="133" width="7" height="1.1" fill="#a83030"/><rect x="16" y="133" width="5" height="1.1" fill="#4a6ae8"/><rect x="23" y="133" width="8" height="1.1" fill="#a83030"/><rect x="8" y="137" width="7" height="1.1" fill="#3a9a3a"/><rect x="8" y="139" width="5" height="1.1" fill="#a83030"/><rect x="8" y="143" width="7" height="1.1" fill="#a83030"/><rect x="16" y="143" width="4" height="1.1" fill="#a83030"/><rect x="8" y="147" width="8" height="1.1" fill="#a83030"/><rect x="9" y="149" width="3" height="1.1" fill="#a83030"/><rect x="13" y="149" width="3" height="1.1" fill="#a83030"/><rect x="17" y="149" width="11" height="1.1" fill="#a83030"/><rect x="29" y="149" width="4" height="1.1" fill="#a83030"/><rect x="34" y="149" width="5" height="1.1" fill="#a83030"/><rect x="40" y="149" width="7" height="1.1" fill="#a83030"/><rect x="48" y="149" width="9" height="1.1" fill="#a83030"/><rect x="58" y="149" width="6" height="1.1" fill="#a83030"/><rect x="65" y="149" width="9" height="1.1" fill="#a83030"/><rect x="75" y="149" width="6" height="1.1" fill="#a83030"/><rect x="82" y="149" width="5" height="1.1" fill="#a83030"/><rect x="10" y="151" width="4" height="1.1" fill="#3a9a3a"/><rect x="15" y="151" width="6" height="1.1" fill="#3a9a3a"/><rect x="22" y="151" width="3" height="1.1" fill="#3a9a3a"/><rect x="26" y="151" width="4" height="1.1" fill="#3a9a3a"/><rect x="10" y="153" width="8" height="1.1" fill="#a83030"/><rect x="12" y="155" width="8" height="1.1" fill="#a83030"/><rect x="14" y="157" width="9" height="1.1" fill="#a83030"/><rect x="14" y="159" width="6" height="1.1" fill="#a83030"/><rect x="12" y="161" width="6" height="1.1" fill="#a83030"/><rect x="19" y="161" width="1" height="1.1" fill="#a83030"/><rect x="14" y="163" width="6" height="1.1" fill="#a83030"/><rect x="14" y="165" width="8" height="1.1" fill="#a83030"/><rect x="23" y="165" width="1" height="1.1" fill="#a83030"/><rect x="14" y="169" width="10" height="1.1" fill="#3a9a3a"/><rect x="25" y="169" width="3" height="1.1" fill="#3a9a3a"/><rect x="29" y="169" width="4" height="1.1" fill="#3a9a3a"/><rect x="34" y="169" width="5" height="1.1" fill="#3a9a3a"/><rect x="40" y="169" width="7" height="1.1" fill="#3a9a3a"/><rect x="48" y="169" width="4" height="1.1" fill="#3a9a3a"/><rect x="53" y="169" width="10" height="1.1" fill="#3a9a3a"/><rect x="64" y="169" width="5" height="1.1" fill="#3a9a3a"/><rect x="16" y="171" width="6" height="1.1" fill="#a83030"/><rect x="23" y="171" width="8" height="1.1" fill="#a83030"/><rect x="32" y="171" width="10" height="1.1" fill="#a83030"/><rect x="43" y="171" width="6" height="1.1" fill="#a83030"/><rect x="50" y="171" width="1" height="1.1" fill="#a83030"/><rect x="16" y="173" width="3" height="1.1" fill="#a83030"/><rect x="20" y="173" width="11" height="1.1" fill="#a83030"/><rect x="32" y="173" width="3" height="1.1" fill="#a83030"/><rect x="36" y="173" width="11" height="1.1" fill="#a83030"/><rect x="48" y="173" width="3" height="1.1" fill="#a83030"/><rect x="16" y="175" width="5" height="1.1" fill="#a83030"/><rect x="22" y="175" width="5" height="1.1" fill="#a83030"/><rect x="28" y="175" width="11" height="1.1" fill="#a83030"/><rect x="40" y="175" width="5" height="1.1" fill="#a83030"/><rect x="46" y="175" width="3" height="1.1" fill="#a83030"/><rect x="16" y="177" width="10" height="1.1" fill="#a83030"/><rect x="27" y="177" width="7" height="1.1" fill="#a83030"/><rect x="35" y="177" width="6" height="1.1" fill="#a83030"/><rect x="42" y="177" width="6" height="1.1" fill="#a83030"/><rect x="16" y="179" width="8" height="1.1" fill="#a83030"/><rect x="25" y="179" width="4" height="1.1" fill="#a83030"/><rect x="30" y="179" width="6" height="1.1" fill="#a83030"/><rect x="37" y="179" width="7" height="1.1" fill="#a83030"/><rect x="45" y="179" width="2" height="1.1" fill="#a83030"/><rect x="16" y="181" width="4" height="1.1" fill="#a83030"/><rect x="21" y="181" width="9" height="1.1" fill="#a83030"/><rect x="31" y="181" width="7" height="1.1" fill="#a83030"/><rect x="39" y="181" width="3" height="1.1" fill="#a83030"/><rect x="43" y="181" width="3" height="1.1" fill="#a83030"/><rect x="16" y="183" width="7" height="1.1" fill="#a83030"/><rect x="24" y="183" width="9" height="1.1" fill="#a83030"/><rect x="34" y="183" width="8" height="1.1" fill="#a83030"/><rect x="43" y="183" width="2" height="1.1" fill="#a83030"/><rect x="16" y="185" width="3" height="1.1" fill="#a83030"/><rect x="20" y="185" width="7" height="1.1" fill="#a83030"/><rect x="28" y="185" width="3" height="1.1" fill="#a83030"/><rect x="32" y="185" width="6" height="1.1" fill="#a83030"/><rect x="39" y="185" width="5" height="1.1" fill="#a83030"/><rect x="16" y="191" width="10" height="1.1" fill="#a83030"/><rect x="27" y="191" width="1" height="1.1" fill="#a83030"/><rect x="16" y="193" width="5" height="1.1" fill="#a83030"/><rect x="22" y="193" width="3" height="1.1" fill="#a83030"/><rect x="26" y="193" width="4" height="1.1" fill="#a83030"/><rect x="16" y="195" width="4" height="1.1" fill="#a83030"/><rect x="21" y="195" width="3" height="1.1" fill="#a83030"/><rect x="25" y="195" width="8" height="1.1" fill="#a83030"/><rect x="16" y="197" width="11" height="1.1" fill="#a83030"/><rect x="28" y="197" width="5" height="1.1" fill="#a83030"/><rect x="16" y="199" width="5" height="1.1" fill="#a83030"/><rect x="22" y="199" width="9" height="1.1" fill="#a83030"/><rect x="16" y="201" width="10" height="1.1" fill="#a83030"/><rect x="27" y="201" width="3" height="1.1" fill="#a83030"/><rect x="16" y="203" width="4" height="1.1" fill="#a83030"/><rect x="21" y="203" width="7" height="1.1" fill="#a83030"/><rect x="16" y="205" width="8" height="1.1" fill="#a83030"/><rect x="25" y="205" width="4" height="1.1" fill="#a83030"/><rect x="16" y="207" width="4" height="1.1" fill="#a83030"/><rect x="21" y="207" width="7" height="1.1" fill="#a83030"/><rect x="16" y="209" width="3" height="1.1" fill="#a83030"/><rect x="20" y="209" width="9" height="1.1" fill="#a83030"/><rect x="30" y="209" width="4" height="1.1" fill="#a83030"/><rect x="16" y="211" width="3" height="1.1" fill="#a83030"/><rect x="20" y="211" width="7" height="1.1" fill="#a83030"/><rect x="28" y="211" width="3" height="1.1" fill="#a83030"/><rect x="32" y="211" width="4" height="1.1" fill="#a83030"/><rect x="16" y="213" width="7" height="1.1" fill="#a83030"/><rect x="24" y="213" width="5" height="1.1" fill="#a83030"/><rect x="30" y="213" width="8" height="1.1" fill="#a83030"/><rect x="39" y="213" width="5" height="1.1" fill="#a83030"/><rect x="16" y="215" width="9" height="1.1" fill="#a83030"/><rect x="26" y="215" width="10" height="1.1" fill="#a83030"/><rect x="37" y="215" width="6" height="1.1" fill="#a83030"/><rect x="44" y="215" width="2" height="1.1" fill="#a83030"/><rect x="16" y="217" width="5" height="1.1" fill="#a83030"/><rect x="22" y="217" width="3" height="1.1" fill="#a83030"/><rect x="26" y="217" width="11" height="1.1" fill="#a83030"/><rect x="38" y="217" width="10" height="1.1" fill="#a83030"/><rect x="16" y="219" width="9" height="1.1" fill="#a83030"/><rect x="26" y="219" width="11" height="1.1" fill="#a83030"/><rect x="38" y="219" width="8" height="1.1" fill="#a83030"/><rect x="16" y="221" width="7" height="1.1" fill="#a83030"/><rect x="24" y="221" width="11" height="1.1" fill="#a83030"/><rect x="36" y="221" width="5" height="1.1" fill="#a83030"/><rect x="42" y="221" width="3" height="1.1" fill="#a83030"/><rect x="15" y="226" width="3" height="1.1" fill="#3a9a3a"/><rect x="19" y="226" width="4" height="1.1" fill="#3a9a3a"/><rect x="24" y="226" width="3" height="1.1" fill="#3a9a3a"/><rect x="28" y="226" width="5" height="1.1" fill="#3a9a3a"/><rect x="34" y="226" width="5" height="1.1" fill="#3a9a3a"/><rect x="40" y="226" width="4" height="1.1" fill="#3a9a3a"/><rect x="16" y="228" width="7" height="1.1" fill="#a83030"/><rect x="24" y="228" width="11" height="1.1" fill="#a83030"/><rect x="36" y="228" width="9" height="1.1" fill="#a83030"/><rect x="46" y="228" width="5" height="1.1" fill="#a83030"/><rect x="52" y="228" width="1" height="1.1" fill="#a83030"/><rect x="16" y="230" width="7" height="1.1" fill="#a83030"/><rect x="24" y="230" width="8" height="1.1" fill="#a83030"/><rect x="33" y="230" width="8" height="1.1" fill="#a83030"/><rect x="42" y="230" width="3" height="1.1" fill="#a83030"/><rect x="46" y="230" width="7" height="1.1" fill="#a83030"/><rect x="16" y="232" width="10" height="1.1" fill="#a83030"/><rect x="27" y="232" width="11" height="1.1" fill="#a83030"/><rect x="39" y="232" width="10" height="1.1" fill="#a83030"/><rect x="50" y="232" width="6" height="1.1" fill="#a83030"/><rect x="16" y="234" width="3" height="1.1" fill="#a83030"/><rect x="20" y="234" width="5" height="1.1" fill="#a83030"/><rect x="26" y="234" width="9" height="1.1" fill="#a83030"/><rect x="36" y="234" width="8" height="1.1" fill="#a83030"/><rect x="45" y="234" width="4" height="1.1" fill="#a83030"/><rect x="50" y="234" width="8" height="1.1" fill="#a83030"/><rect x="16" y="236" width="7" height="1.1" fill="#a83030"/><rect x="24" y="236" width="10" height="1.1" fill="#a83030"/><rect x="35" y="236" width="3" height="1.1" fill="#a83030"/><rect x="39" y="236" width="5" height="1.1" fill="#a83030"/><rect x="45" y="236" width="9" height="1.1" fill="#a83030"/><rect x="55" y="236" width="5" height="1.1" fill="#a83030"/><rect x="16" y="238" width="4" height="1.1" fill="#a83030"/><rect x="21" y="238" width="10" height="1.1" fill="#a83030"/><rect x="32" y="238" width="8" height="1.1" fill="#a83030"/><rect x="41" y="238" width="4" height="1.1" fill="#a83030"/><rect x="46" y="238" width="8" height="1.1" fill="#a83030"/><rect x="55" y="238" width="6" height="1.1" fill="#a83030"/><rect x="16" y="240" width="10" height="1.1" fill="#a83030"/><rect x="27" y="240" width="6" height="1.1" fill="#a83030"/><rect x="34" y="240" width="4" height="1.1" fill="#a83030"/><rect x="39" y="240" width="6" height="1.1" fill="#a83030"/><rect x="46" y="240" width="7" height="1.1" fill="#a83030"/><rect x="54" y="240" width="4" height="1.1" fill="#a83030"/><rect x="16" y="242" width="5" height="1.1" fill="#a83030"/><rect x="22" y="242" width="9" height="1.1" fill="#a83030"/><rect x="32" y="242" width="7" height="1.1" fill="#a83030"/><rect x="40" y="242" width="11" height="1.1" fill="#a83030"/><rect x="52" y="242" width="4" height="1.1" fill="#a83030"/><rect x="16" y="246" width="4" height="1.1" fill="#a83030"/><rect x="21" y="246" width="11" height="1.1" fill="#a83030"/><rect x="33" y="246" width="7" height="1.1" fill="#a83030"/><rect x="41" y="246" width="4" height="1.1" fill="#a83030"/><rect x="46" y="246" width="2" height="1.1" fill="#a83030"/><rect x="16" y="248" width="6" height="1.1" fill="#a83030"/><rect x="23" y="248" width="4" height="1.1" fill="#a83030"/><rect x="28" y="248" width="4" height="1.1" fill="#a83030"/><rect x="33" y="248" width="3" height="1.1" fill="#a83030"/><rect x="37" y="248" width="3" height="1.1" fill="#a83030"/><rect x="41" y="248" width="8" height="1.1" fill="#a83030"/><rect x="16" y="250" width="9" height="1.1" fill="#a83030"/><rect x="26" y="250" width="7" height="1.1" fill="#a83030"/><rect x="34" y="250" width="6" height="1.1" fill="#a83030"/><rect x="41" y="250" width="5" height="1.1" fill="#a83030"/><rect x="47" y="250" width="3" height="1.1" fill="#a83030"/><rect x="16" y="252" width="6" height="1.1" fill="#a83030"/><rect x="23" y="252" width="4" height="1.1" fill="#a83030"/><rect x="28" y="252" width="8" height="1.1" fill="#a83030"/><rect x="37" y="252" width="10" height="1.1" fill="#a83030"/><rect x="48" y="252" width="3" height="1.1" fill="#a83030"/><rect x="16" y="254" width="11" height="1.1" fill="#a83030"/><rect x="28" y="254" width="11" height="1.1" fill="#a83030"/><rect x="40" y="254" width="7" height="1.1" fill="#a83030"/><rect x="48" y="254" width="6" height="1.1" fill="#a83030"/><rect x="16" y="256" width="9" height="1.1" fill="#a83030"/><rect x="26" y="256" width="7" height="1.1" fill="#a83030"/><rect x="34" y="256" width="7" height="1.1" fill="#a83030"/><rect x="42" y="256" width="8" height="1.1" fill="#a83030"/><rect x="51" y="256" width="5" height="1.1" fill="#a83030"/><rect x="16" y="258" width="6" height="1.1" fill="#a83030"/><rect x="23" y="258" width="3" height="1.1" fill="#a83030"/><rect x="27" y="258" width="5" height="1.1" fill="#a83030"/><rect x="33" y="258" width="7" height="1.1" fill="#a83030"/><rect x="41" y="258" width="10" height="1.1" fill="#a83030"/><rect x="52" y="258" width="3" height="1.1" fill="#a83030"/><rect x="16" y="260" width="11" height="1.1" fill="#a83030"/><rect x="28" y="260" width="8" height="1.1" fill="#a83030"/><rect x="37" y="260" width="10" height="1.1" fill="#a83030"/><rect x="48" y="260" width="6" height="1.1" fill="#a83030"/><rect x="16" y="262" width="6" height="1.1" fill="#a83030"/><rect x="23" y="262" width="10" height="1.1" fill="#a83030"/><rect x="34" y="262" width="11" height="1.1" fill="#a83030"/><rect x="46" y="262" width="7" height="1.1" fill="#a83030"/><rect x="16" y="264" width="11" height="1.1" fill="#a83030"/><rect x="28" y="264" width="10" height="1.1" fill="#a83030"/><rect x="39" y="264" width="4" height="1.1" fill="#a83030"/><rect x="44" y="264" width="2" height="1.1" fill="#a83030"/><rect x="16" y="266" width="9" height="1.1" fill="#a83030"/><rect x="26" y="266" width="6" height="1.1" fill="#a83030"/><rect x="33" y="266" width="5" height="1.1" fill="#a83030"/><rect x="39" y="266" width="3" height="1.1" fill="#a83030"/><rect x="43" y="266" width="4" height="1.1" fill="#a83030"/><rect x="16" y="268" width="5" height="1.1" fill="#a83030"/><rect x="22" y="268" width="4" height="1.1" fill="#a83030"/><rect x="27" y="268" width="8" height="1.1" fill="#a83030"/><rect x="36" y="268" width="5" height="1.1" fill="#a83030"/><rect x="42" y="268" width="6" height="1.1" fill="#a83030"/><rect x="16" y="270" width="4" height="1.1" fill="#a83030"/><rect x="21" y="270" width="9" height="1.1" fill="#a83030"/><rect x="31" y="270" width="8" height="1.1" fill="#a83030"/><rect x="40" y="270" width="9" height="1.1" fill="#a83030"/><rect x="16" y="272" width="7" height="1.1" fill="#a83030"/><rect x="24" y="272" width="6" height="1.1" fill="#a83030"/><rect x="31" y="272" width="3" height="1.1" fill="#a83030"/><rect x="35" y="272" width="10" height="1.1" fill="#a83030"/><rect x="46" y="272" width="4" height="1.1" fill="#a83030"/><rect x="16" y="274" width="3" height="1.1" fill="#a83030"/><rect x="20" y="274" width="5" height="1.1" fill="#a83030"/><rect x="26" y="274" width="10" height="1.1" fill="#a83030"/><rect x="37" y="274" width="10" height="1.1" fill="#a83030"/><rect x="48" y="274" width="4" height="1.1" fill="#a83030"/><rect x="16" y="276" width="5" height="1.1" fill="#a83030"/><rect x="22" y="276" width="4" height="1.1" fill="#a83030"/><rect x="27" y="276" width="4" height="1.1" fill="#a83030"/><rect x="32" y="276" width="4" height="1.1" fill="#a83030"/><rect x="37" y="276" width="9" height="1.1" fill="#a83030"/><rect x="47" y="276" width="4" height="1.1" fill="#a83030"/><rect x="16" y="278" width="11" height="1.1" fill="#a83030"/><rect x="28" y="278" width="4" height="1.1" fill="#a83030"/><rect x="33" y="278" width="9" height="1.1" fill="#a83030"/><rect x="43" y="278" width="5" height="1.1" fill="#a83030"/><rect x="49" y="278" width="1" height="1.1" fill="#a83030"/><rect x="16" y="280" width="8" height="1.1" fill="#a83030"/><rect x="25" y="280" width="10" height="1.1" fill="#a83030"/><rect x="36" y="280" width="3" height="1.1" fill="#a83030"/><rect x="40" y="280" width="6" height="1.1" fill="#a83030"/><rect x="47" y="280" width="2" height="1.1" fill="#a83030"/><rect x="8" y="283" width="4" height="1.1" fill="#a83030"/><rect x="13" y="283" width="7" height="1.1" fill="#a83030"/><rect x="12" y="285" width="7" height="1.1" fill="#a83030"/><rect x="20" y="285" width="6" height="1.1" fill="#a83030"/><rect x="27" y="285" width="5" height="1.1" fill="#a83030"/><rect x="12" y="287" width="7" height="1.1" fill="#a83030"/><rect x="20" y="287" width="8" height="1.1" fill="#a83030"/><rect x="29" y="287" width="4" height="1.1" fill="#a83030"/><rect x="34" y="287" width="9" height="1.1" fill="#a83030"/><rect x="44" y="287" width="6" height="1.1" fill="#a83030"/><rect x="51" y="287" width="5" height="1.1" fill="#a83030"/><rect x="57" y="287" width="7" height="1.1" fill="#a83030"/><rect x="65" y="287" width="5" height="1.1" fill="#a83030"/><rect x="12" y="289" width="9" height="1.1" fill="#a83030"/><rect x="22" y="289" width="5" height="1.1" fill="#a83030"/><rect x="16" y="291" width="9" height="1.1" fill="#3a9a3a"/><rect x="16" y="293" width="7" height="1.1" fill="#3a9a3a"/><rect x="16" y="295" width="3" height="1.1" fill="#3a9a3a"/><rect x="20" y="295" width="8" height="1.1" fill="#3a9a3a"/><rect x="29" y="295" width="1" height="1.1" fill="#3a9a3a"/><rect x="8" y="299" width="5" height="1.1" fill="#a83030"/><rect x="12" y="301" width="6" height="1.1" fill="#a83030"/><rect x="19" y="301" width="5" height="1.1" fill="#a83030"/><rect x="25" y="301" width="5" height="1.1" fill="#a83030"/><rect x="12" y="303" width="3" height="1.1" fill="#3a9a3a"/><rect x="16" y="303" width="5" height="1.1" fill="#3a9a3a"/><rect x="22" y="303" width="6" height="1.1" fill="#3a9a3a"/><rect x="12" y="305" width="7" height="1.1" fill="#a83030"/><rect x="20" y="305" width="3" height="1.1" fill="#a83030"/><rect x="24" y="305" width="6" height="1.1" fill="#a83030"/><rect x="12" y="307" width="5" height="1.1" fill="#3a9a3a"/><rect x="18" y="307" width="8" height="1.1" fill="#3a9a3a"/><rect x="12" y="309" width="8" height="1.1" fill="#a83030"/><rect x="21" y="309" width="6" height="1.1" fill="#a83030"/><rect x="28" y="309" width="2" height="1.1" fill="#a83030"/><rect x="12" y="313" width="7" height="1.1" fill="#a83030"/><rect x="20" y="313" width="4" height="1.1" fill="#a83030"/><rect x="12" y="315" width="4" height="1.1" fill="#a83030"/><rect x="17" y="315" width="4" height="1.1" fill="#a83030"/><rect x="12" y="317" width="3" height="1.1" fill="#3a9a3a"/><rect x="16" y="317" width="8" height="1.1" fill="#3a9a3a"/><rect x="25" y="317" width="7" height="1.1" fill="#3a9a3a"/><rect x="8" y="320" width="6" height="1.1" fill="#a83030"/><rect x="12" y="322" width="3" height="1.1" fill="#a83030"/><rect x="16" y="322" width="6" height="1.1" fill="#a83030"/><rect x="23" y="322" width="6" height="1.1" fill="#a83030"/><rect x="30" y="322" width="6" height="1.1" fill="#a83030"/><rect x="12" y="324" width="3" height="1.1" fill="#a83030"/><rect x="16" y="324" width="7" height="1.1" fill="#a83030"/><rect x="24" y="324" width="7" height="1.1" fill="#a83030"/><rect x="32" y="324" width="6" height="1.1" fill="#a83030"/><rect x="12" y="326" width="4" height="1.1" fill="#a83030"/><rect x="17" y="326" width="9" height="1.1" fill="#a83030"/><rect x="27" y="326" width="8" height="1.1" fill="#a83030"/><rect x="36" y="326" width="4" height="1.1" fill="#a83030"/><rect x="12" y="328" width="6" height="1.1" fill="#a83030"/><rect x="19" y="328" width="7" height="1.1" fill="#a83030"/><rect x="12" y="330" width="3" height="1.1" fill="#a83030"/><rect x="16" y="330" width="9" height="1.1" fill="#a83030"/><rect x="26" y="330" width="2" height="1.1" fill="#a83030"/><rect x="12" y="332" width="9" height="1.1" fill="#a83030"/><rect x="22" y="332" width="4" height="1.1" fill="#a83030"/><rect x="12" y="334" width="8" height="1.1" fill="#a83030"/><rect x="21" y="334" width="5" height="1.1" fill="#4a6ae8"/><rect x="28" y="334" width="10" height="1.1" fill="#a83030"/><rect x="12" y="336" width="6" height="1.1" fill="#a83030"/><rect x="19" y="336" width="5" height="1.1" fill="#a83030"/><rect x="16" y="338" width="8" height="1.1" fill="#a83030"/><rect x="25" y="338" width="7" height="1.1" fill="#a83030"/><rect x="16" y="340" width="3" height="1.1" fill="#a83030"/><rect x="20" y="340" width="6" height="1.1" fill="#a83030"/><rect x="27" y="340" width="3" height="1.1" fill="#a83030"/><rect x="31" y="340" width="1" height="1.1" fill="#a83030"/><rect x="16" y="342" width="6" height="1.1" fill="#a83030"/><rect x="23" y="342" width="9" height="1.1" fill="#a83030"/><rect x="16" y="344" width="3" height="1.1" fill="#a83030"/><rect x="20" y="344" width="11" height="1.1" fill="#a83030"/><rect x="12" y="346" width="11" height="1.1" fill="#a83030"/><rect x="24" y="346" width="6" height="1.1" fill="#a83030"/><rect x="12" y="348" width="10" height="1.1" fill="#a83030"/><rect x="23" y="348" width="3" height="1.1" fill="#a83030"/><rect x="16" y="350" width="5" height="1.1" fill="#a83030"/><rect x="22" y="350" width="8" height="1.1" fill="#a83030"/><rect x="8" y="352.5" width="82" height="2" fill="#d8d8d8"/><rect x="53" y="352.5" width="27" height="2" fill="#a8a8a8"/><rect x="16" y="353" width="10" height="1.1" fill="#a83030"/><rect x="27" y="353" width="7" height="1.1" fill="#a83030"/><rect x="35" y="353" width="4" height="1.1" fill="#a83030"/><rect x="40" y="353" width="11" height="1.1" fill="#a83030"/><rect x="52" y="353" width="9" height="1.1" fill="#a83030"/><rect x="62" y="353" width="5" height="1.1" fill="#a83030"/><rect x="68" y="353" width="7" height="1.1" fill="#a83030"/><rect x="76" y="353" width="9" height="1.1" fill="#a83030"/><rect x="86" y="353" width="8" height="1.1" fill="#a83030"/><rect x="95" y="353" width="3" height="1.1" fill="#a83030"/><rect x="16" y="355" width="10" height="1.1" fill="#a83030"/><rect x="27" y="355" width="1" height="1.1" fill="#a83030"/><rect x="8" y="356.5" width="82" height="2" fill="#d8d8d8"/><rect x="27" y="356.5" width="12" height="2" fill="#a8a8a8"/><rect x="18" y="357" width="11" height="1.1" fill="#a83030"/><rect x="30" y="357" width="6" height="1.1" fill="#a83030"/><rect x="37" y="357" width="5" height="1.1" fill="#a83030"/><rect x="43" y="357" width="5" height="1.1" fill="#a83030"/><rect x="18" y="359" width="5" height="1.1" fill="#a83030"/><rect x="8" y="360.5" width="82" height="2" fill="#d8d8d8"/><rect x="31" y="360.5" width="27" height="2" fill="#a8a8a8"/><rect x="20" y="361" width="6" height="1.1" fill="#a83030"/><rect x="27" y="361" width="11" height="1.1" fill="#a83030"/><rect x="39" y="361" width="11" height="1.1" fill="#a83030"/><rect x="51" y="361" width="3" height="1.1" fill="#a83030"/><rect x="55" y="361" width="3" height="1.1" fill="#a83030"/><rect x="16" y="363" width="8" height="1.1" fill="#a83030"/><rect x="8" y="364.5" width="82" height="2" fill="#d8d8d8"/><rect x="27" y="364.5" width="12" height="2" fill="#a8a8a8"/><rect x="18" y="365" width="3" height="1.1" fill="#a83030"/><rect x="22" y="365" width="5" height="1.1" fill="#a83030"/><rect x="28" y="365" width="8" height="1.1" fill="#a83030"/><rect x="37" y="365" width="6" height="1.1" fill="#a83030"/><rect x="44" y="365" width="4" height="1.1" fill="#a83030"/><rect x="18" y="367" width="5" height="1.1" fill="#a83030"/><rect x="8" y="368.5" width="82" height="2" fill="#d8d8d8"/><rect x="31" y="368.5" width="27" height="2" fill="#a8a8a8"/><rect x="20" y="369" width="4" height="1.1" fill="#a83030"/><rect x="25" y="369" width="3" height="1.1" fill="#a83030"/><rect x="29" y="369" width="9" height="1.1" fill="#a83030"/><rect x="39" y="369" width="7" height="1.1" fill="#a83030"/><rect x="47" y="369" width="8" height="1.1" fill="#a83030"/><rect x="56" y="369" width="2" height="1.1" fill="#a83030"/><rect x="16" y="371" width="7" height="1.1" fill="#b040d0"/><rect x="24" y="371" width="7" height="1.1" fill="#b040d0"/><rect x="8" y="372.5" width="82" height="2" fill="#d8d8d8"/><rect x="34" y="372.5" width="27" height="2" fill="#a8a8a8"/><rect x="18" y="373" width="11" height="1.1" fill="#a83030"/><rect x="30" y="373" width="10" height="1.1" fill="#a83030"/><rect x="41" y="373" width="11" height="1.1" fill="#a83030"/><rect x="53" y="373" width="3" height="1.1" fill="#a83030"/><rect x="57" y="373" width="10" height="1.1" fill="#a83030"/><rect x="68" y="373" width="9" height="1.1" fill="#a83030"/><rect x="78" y="373" width="2" height="1.1" fill="#a83030"/><rect x="20" y="375" width="7" height="1.1" fill="#a83030"/><rect x="28" y="375" width="5" height="1.1" fill="#a83030"/><rect x="34" y="375" width="4" height="1.1" fill="#a83030"/><rect x="18" y="377" width="5" height="1.1" fill="#b040d0"/><rect x="24" y="377" width="3" height="1.1" fill="#b040d0"/><rect x="20" y="379" width="7" height="1.1" fill="#a83030"/><rect x="28" y="379" width="5" height="1.1" fill="#a83030"/><rect x="18" y="381" width="7" height="1.1" fill="#b040d0"/><rect x="26" y="381" width="2" height="1.1" fill="#b040d0"/><rect x="14" y="383" width="6" height="1.1" fill="#a83030"/><rect x="8" y="384.5" width="82" height="2" fill="#d8d8d8"/><rect x="46" y="384.5" width="12" height="2" fill="#a8a8a8"/><rect x="16" y="385" width="11" height="1.1" fill="#a83030"/><rect x="28" y="385" width="8" height="1.1" fill="#a83030"/><rect x="37" y="385" width="8" height="1.1" fill="#a83030"/><rect x="46" y="385" width="5" height="1.1" fill="#a83030"/><rect x="52" y="385" width="6" height="1.1" fill="#a83030"/><rect x="59" y="385" width="4" height="1.1" fill="#a83030"/><rect x="64" y="385" width="9" height="1.1" fill="#a83030"/><rect x="74" y="385" width="3" height="1.1" fill="#a83030"/><rect x="78" y="385" width="6" height="1.1" fill="#a83030"/><rect x="16" y="387" width="7" height="1.1" fill="#a83030"/><rect x="18" y="389" width="3" height="1.1" fill="#a83030"/><rect x="22" y="389" width="10" height="1.1" fill="#a83030"/><rect x="33" y="389" width="5" height="1.1" fill="#a83030"/><rect x="16" y="391" width="4" height="1.1" fill="#a83030"/><rect x="21" y="391" width="4" height="1.1" fill="#a83030"/><rect x="8" y="392.5" width="82" height="2" fill="#d8d8d8"/><rect x="27" y="392.5" width="12" height="2" fill="#a8a8a8"/><rect x="18" y="393" width="8" height="1.1" fill="#a83030"/><rect x="27" y="393" width="4" height="1.1" fill="#a83030"/><rect x="32" y="393" width="3" height="1.1" fill="#a83030"/><rect x="36" y="393" width="3" height="1.1" fill="#a83030"/><rect x="18" y="395" width="4" height="1.1" fill="#a83030"/><rect x="8" y="396.5" width="82" height="2" fill="#d8d8d8"/><rect x="31" y="396.5" width="27" height="2" fill="#a8a8a8"/><rect x="20" y="397" width="10" height="1.1" fill="#a83030"/><rect x="31" y="397" width="9" height="1.1" fill="#a83030"/><rect x="41" y="397" width="6" height="1.1" fill="#a83030"/><rect x="16" y="399" width="7" height="1.1" fill="#b040d0"/><rect x="24" y="399" width="3" height="1.1" fill="#b040d0"/><rect x="28" y="399" width="3" height="1.1" fill="#b040d0"/><rect x="8" y="400.5" width="82" height="2" fill="#d8d8d8"/><rect x="34" y="400.5" width="27" height="2" fill="#a8a8a8"/><rect x="18" y="401" width="7" height="1.1" fill="#a83030"/><rect x="26" y="401" width="11" height="1.1" fill="#a83030"/><rect x="38" y="401" width="5" height="1.1" fill="#a83030"/><rect x="44" y="401" width="3" height="1.1" fill="#a83030"/><rect x="48" y="401" width="8" height="1.1" fill="#a83030"/><rect x="57" y="401" width="7" height="1.1" fill="#a83030"/><rect x="20" y="403" width="5" height="1.1" fill="#a83030"/><rect x="26" y="403" width="8" height="1.1" fill="#a83030"/><rect x="18" y="405" width="4" height="1.1" fill="#b040d0"/><rect x="23" y="405" width="5" height="1.1" fill="#b040d0"/><rect x="20" y="407" width="7" height="1.1" fill="#a83030"/><rect x="28" y="407" width="5" height="1.1" fill="#a83030"/><rect x="18" y="409" width="8" height="1.1" fill="#b040d0"/><rect x="27" y="409" width="1" height="1.1" fill="#b040d0"/><rect x="8" y="412" width="3" height="1.1" fill="#a83030"/><rect x="12" y="412" width="1" height="1.1" fill="#a83030"/><rect x="8" y="413" width="4" height="1.1" fill="#a83030"/><rect x="12" y="415" width="4" height="1.1" fill="#a83030"/><rect x="17" y="415" width="7" height="1.1" fill="#a83030"/><rect x="25" y="415" width="1" height="1.1" fill="#a83030"/><rect x="12" y="417" width="11" height="1.1" fill="#a83030"/><rect x="24" y="417" width="8" height="1.1" fill="#a83030"/><rect x="33" y="417" width="4" height="1.1" fill="#a83030"/><rect x="12" y="419" width="9" height="1.1" fill="#a83030"/><rect x="16" y="421" width="6" height="1.1" fill="#a83030"/><rect x="23" y="421" width="5" height="1.1" fill="#a83030"/><rect x="16" y="423" width="4" height="1.1" fill="#a83030"/><rect x="21" y="423" width="6" height="1.1" fill="#a83030"/><rect x="28" y="423" width="9" height="1.1" fill="#a83030"/><rect x="38" y="423" width="2" height="1.1" fill="#a83030"/><rect x="16" y="425" width="8" height="1.1" fill="#a83030"/><rect x="25" y="425" width="7" height="1.1" fill="#a83030"/><rect x="33" y="425" width="7" height="1.1" fill="#a83030"/><rect x="41" y="425" width="6" height="1.1" fill="#a83030"/><rect x="48" y="425" width="3" height="1.1" fill="#a83030"/><rect x="16" y="427" width="11" height="1.1" fill="#a83030"/><rect x="28" y="427" width="3" height="1.1" fill="#a83030"/><rect x="32" y="427" width="8" height="1.1" fill="#a83030"/><rect x="41" y="427" width="5" height="1.1" fill="#a83030"/><rect x="16" y="429" width="11" height="1.1" fill="#a83030"/><rect x="28" y="429" width="9" height="1.1" fill="#a83030"/><rect x="38" y="429" width="6" height="1.1" fill="#a83030"/><rect x="8" y="432" width="7" height="1.1" fill="#a83030"/><rect x="16" y="432" width="3" height="1.1" fill="#a83030"/><rect x="20" y="432" width="2" height="1.1" fill="#a83030"/><rect x="10" y="434" width="8" height="1.1" fill="#a83030"/><rect x="19" y="434" width="9" height="1.1" fill="#a83030"/><rect x="10" y="436" width="5" height="1.1" fill="#a83030"/><rect x="16" y="436" width="9" height="1.1" fill="#a83030"/><rect x="26" y="436" width="10" height="1.1" fill="#a83030"/><rect x="12" y="438" width="7" height="1.1" fill="#a83030"/><rect x="16" y="440" width="4" height="1.1" fill="#a83030"/><rect x="16" y="442" width="3" height="1.1" fill="#a83030"/><rect x="20" y="442" width="4" height="1.1" fill="#a83030"/><rect x="16" y="444" width="3" height="1.1" fill="#a83030"/><rect x="20" y="444" width="4" height="1.1" fill="#a83030"/><rect x="16" y="446" width="4" height="1.1" fill="#a83030"/><rect x="12" y="448" width="8" height="1.1" fill="#a83030"/><rect x="21" y="448" width="5" height="1.1" fill="#a83030"/><rect x="8" y="452" width="8" height="1.1" fill="#a83030"/><rect x="17" y="452" width="5" height="1.1" fill="#a83030"/><rect x="8" y="456" width="6" height="1.1" fill="#a83030"/><rect x="15" y="456" width="5" height="1.1" fill="#a83030"/><rect x="8" y="460" width="11" height="1.1" fill="#a83030"/><rect x="20" y="460" width="1" height="1.1" fill="#a83030"/><rect x="8" y="464" width="11" height="1.1" fill="#a83030"/><rect x="20" y="464" width="2" height="1.1" fill="#a83030"/><rect x="8" y="468" width="5" height="1.1" fill="#a83030"/><rect x="14" y="468" width="9" height="1.1" fill="#a83030"/><rect x="24" y="468" width="4" height="1.1" fill="#a83030"/><rect x="8" y="472" width="7" height="1.1" fill="#a83030"/><rect x="8" y="478" width="6" height="1.1" fill="#a83030"/><rect x="15" y="478" width="6" height="1.1" fill="#a83030"/><rect x="8" y="482" width="4" height="1.1" fill="#a83030"/><rect x="8" y="486" width="3" height="1.1" fill="#a83030"/><rect x="12" y="486" width="1" height="1.1" fill="#a83030"/><rect x="8" y="490" width="4" height="1.1" fill="#a83030"/><rect x="8" y="494" width="4" height="1.1" fill="#a83030"/><rect x="13" y="494" width="3" height="1.1" fill="#a83030"/><rect x="8" y="498" width="8" height="1.1" fill="#a83030"/><rect x="8" y="502" width="4" height="1.1" fill="#a83030"/><rect x="8" y="506" width="8" height="1.1" fill="#3a9a3a"/><rect x="17" y="506" width="1" height="1.1" fill="#3a9a3a"/><rect x="8" y="510" width="7" height="1.1" fill="#a83030"/><rect x="16" y="510" width="5" height="1.1" fill="#a83030"/><rect x="10" y="512" width="5" height="1.1" fill="#a83030"/><rect x="16" y="512" width="7" height="1.1" fill="#a83030"/><rect x="24" y="512" width="4" height="1.1" fill="#a83030"/><rect x="12" y="514" width="10" height="1.1" fill="#a83030"/><rect x="23" y="514" width="3" height="1.1" fill="#a83030"/><rect x="27" y="514" width="10" height="1.1" fill="#a83030"/><rect x="38" y="514" width="4" height="1.1" fill="#a83030"/><rect x="12" y="516" width="6" height="1.1" fill="#a83030"/><rect x="19" y="516" width="11" height="1.1" fill="#a83030"/><rect x="31" y="516" width="5" height="1.1" fill="#a83030"/><rect x="12" y="518" width="6" height="1.1" fill="#a83030"/><rect x="19" y="518" width="5" height="1.1" fill="#a83030"/><rect x="12" y="520" width="6" height="1.1" fill="#a83030"/><rect x="14" y="522" width="4" height="1.1" fill="#a83030"/><rect x="14" y="524" width="4" height="1.1" fill="#a83030"/><rect x="10" y="526" width="10" height="1.1" fill="#a83030"/><rect x="21" y="526" width="9" height="1.1" fill="#a83030"/><rect x="12" y="528" width="9" height="1.1" fill="#a83030"/><rect x="22" y="528" width="4" height="1.1" fill="#a83030"/><rect x="27" y="528" width="8" height="1.1" fill="#a83030"/><rect x="36" y="528" width="8" height="1.1" fill="#a83030"/><rect x="12" y="530" width="11" height="1.1" fill="#a83030"/><rect x="24" y="530" width="11" height="1.1" fill="#a83030"/><rect x="36" y="530" width="3" height="1.1" fill="#a83030"/><rect x="40" y="530" width="2" height="1.1" fill="#a83030"/><rect x="12" y="532" width="4" height="1.1" fill="#a83030"/><rect x="17" y="532" width="4" height="1.1" fill="#a83030"/><rect x="22" y="532" width="2" height="1.1" fill="#a83030"/><rect x="14" y="534" width="4" height="1.1" fill="#a83030"/><rect x="14" y="536" width="4" height="1.1" fill="#a83030"/><rect x="14" y="538" width="4" height="1.1" fill="#a83030"/><rect x="10" y="540" width="4" height="1.1" fill="#a83030"/><rect x="15" y="540" width="7" height="1.1" fill="#a83030"/><rect x="23" y="540" width="4" height="1.1" fill="#a83030"/><rect x="28" y="540" width="1" height="1.1" fill="#a83030"/><rect x="12" y="542" width="11" height="1.1" fill="#a83030"/><rect x="24" y="542" width="11" height="1.1" fill="#a83030"/><rect x="36" y="542" width="7" height="1.1" fill="#a83030"/><rect x="12" y="544" width="10" height="1.1" fill="#a83030"/><rect x="23" y="544" width="4" height="1.1" fill="#a83030"/><rect x="12" y="546" width="6" height="1.1" fill="#a83030"/><rect x="14" y="548" width="4" height="1.1" fill="#a83030"/><rect x="14" y="550" width="4" height="1.1" fill="#a83030"/><rect x="10" y="552" width="7" height="1.1" fill="#a83030"/><rect x="18" y="552" width="3" height="1.1" fill="#a83030"/><rect x="22" y="552" width="6" height="1.1" fill="#a83030"/><rect x="29" y="552" width="3" height="1.1" fill="#a83030"/><rect x="12" y="554" width="7" height="1.1" fill="#a83030"/><rect x="20" y="554" width="6" height="1.1" fill="#a83030"/><rect x="27" y="554" width="8" height="1.1" fill="#a83030"/><rect x="36" y="554" width="3" height="1.1" fill="#a83030"/><rect x="40" y="554" width="8" height="1.1" fill="#a83030"/><rect x="49" y="554" width="3" height="1.1" fill="#a83030"/><rect x="12" y="556" width="5" height="1.1" fill="#a83030"/><rect x="18" y="556" width="6" height="1.1" fill="#a83030"/><rect x="10" y="559" width="7" height="1.1" fill="#a83030"/><rect x="18" y="559" width="9" height="1.1" fill="#a83030"/><rect x="28" y="559" width="2" height="1.1" fill="#a83030"/><rect x="12" y="561" width="7" height="1.1" fill="#a83030"/><rect x="20" y="561" width="4" height="1.1" fill="#a83030"/><rect x="25" y="561" width="7" height="1.1" fill="#a83030"/><rect x="33" y="561" width="5" height="1.1" fill="#a83030"/><rect x="39" y="561" width="3" height="1.1" fill="#a83030"/><rect x="43" y="561" width="6" height="1.1" fill="#a83030"/><rect x="50" y="561" width="2" height="1.1" fill="#a83030"/><rect x="12" y="563" width="7" height="1.1" fill="#a83030"/><rect x="20" y="563" width="2" height="1.1" fill="#a83030"/><rect x="10" y="565" width="9" height="1.1" fill="#a83030"/><rect x="20" y="565" width="10" height="1.1" fill="#a83030"/><rect x="31" y="565" width="4" height="1.1" fill="#a83030"/><rect x="12" y="567" width="6" height="1.1" fill="#a83030"/><rect x="19" y="567" width="10" height="1.1" fill="#a83030"/><rect x="30" y="567" width="11" height="1.1" fill="#a83030"/><rect x="42" y="567" width="10" height="1.1" fill="#a83030"/><rect x="12" y="569" width="5" height="1.1" fill="#a83030"/><rect x="18" y="569" width="6" height="1.1" fill="#a83030"/><rect x="10" y="573" width="4" height="1.1" fill="#a83030"/><rect x="15" y="573" width="10" height="1.1" fill="#a83030"/><rect x="26" y="573" width="8" height="1.1" fill="#a83030"/><rect x="12" y="575" width="3" height="1.1" fill="#a83030"/><rect x="16" y="575" width="9" height="1.1" fill="#a83030"/><rect x="26" y="575" width="3" height="1.1" fill="#a83030"/><rect x="30" y="575" width="3" height="1.1" fill="#a83030"/><rect x="34" y="575" width="4" height="1.1" fill="#a83030"/><rect x="39" y="575" width="3" height="1.1" fill="#a83030"/><rect x="43" y="575" width="4" height="1.1" fill="#a83030"/><rect x="48" y="575" width="6" height="1.1" fill="#a83030"/><rect x="12" y="577" width="6" height="1.1" fill="#a83030"/><rect x="19" y="577" width="3" height="1.1" fill="#a83030"/><rect x="10" y="579" width="10" height="1.1" fill="#a83030"/><rect x="21" y="579" width="9" height="1.1" fill="#a83030"/><rect x="31" y="579" width="4" height="1.1" fill="#a83030"/><rect x="12" y="581" width="8" height="1.1" fill="#a83030"/><rect x="21" y="581" width="3" height="1.1" fill="#a83030"/><rect x="25" y="581" width="5" height="1.1" fill="#a83030"/><rect x="31" y="581" width="3" height="1.1" fill="#a83030"/><rect x="35" y="581" width="7" height="1.1" fill="#a83030"/><rect x="43" y="581" width="8" height="1.1" fill="#a83030"/><rect x="52" y="581" width="2" height="1.1" fill="#a83030"/><rect x="12" y="583" width="3" height="1.1" fill="#a83030"/><rect x="16" y="583" width="6" height="1.1" fill="#a83030"/><rect x="10" y="585" width="9" height="1.1" fill="#a83030"/><rect x="20" y="585" width="6" height="1.1" fill="#a83030"/><rect x="27" y="585" width="7" height="1.1" fill="#a83030"/><rect x="12" y="587" width="4" height="1.1" fill="#a83030"/><rect x="17" y="587" width="4" height="1.1" fill="#a83030"/><rect x="22" y="587" width="4" height="1.1" fill="#a83030"/><rect x="27" y="587" width="8" height="1.1" fill="#a83030"/><rect x="36" y="587" width="8" height="1.1" fill="#a83030"/><rect x="45" y="587" width="8" height="1.1" fill="#a83030"/><rect x="12" y="589" width="10" height="1.1" fill="#a83030"/></svg>
  <div class="abs" style="left:1321px;top:87px;width:1px;height:591px;background:#e5e5e5"></div>
  <div class="abs" style="left:1322px;top:87px;width:12px;height:591px;background:#fff"></div>
  <div class="abs" style="left:1326px;top:212px;width:5px;height:14px;background:#bdbdbd"></div>
  <div class="abs" style="left:1322px;top:431px;width:12px;height:41px;background:rgba(100,100,100,0.35)"></div>
  <div class="abs" style="left:1326px;top:440px;width:5px;height:20px;background:rgba(100,100,100,0.35)"></div>
  <div class="abs" style="left:1326px;top:462px;width:5px;height:16px;background:rgba(100,100,100,0.35)"></div>
  <div class="abs" style="left:1322px;top:447px;width:13px;height:2px;background:#555"></div>
  <div class="abs" style="left:541px;top:666px;width:477px;height:12px;background:rgba(100,100,100,0.4)"></div>

  <svg class="abs" style="left:822px;top:345px;width:11px;height:20px;z-index:20" viewBox="0 0 11 20"><path d="M3 3.3H8M5.5 3.3V17.4M3 17.4H8" stroke="#fff" stroke-width="3.2" stroke-linecap="round" fill="none"/><path d="M3.2 3.3H4.7M6.3 3.3H7.8M5.5 3.8V16.9M3.2 17.4H4.7M6.3 17.4H7.8" stroke="#111" stroke-width="1.2" fill="none"/><path d="M4.5 3.5L5.5 4.2L6.5 3.5M4.5 17.2L5.5 16.5L6.5 17.2" stroke="#111" stroke-width="1" fill="none"/></svg>

</body></html>
